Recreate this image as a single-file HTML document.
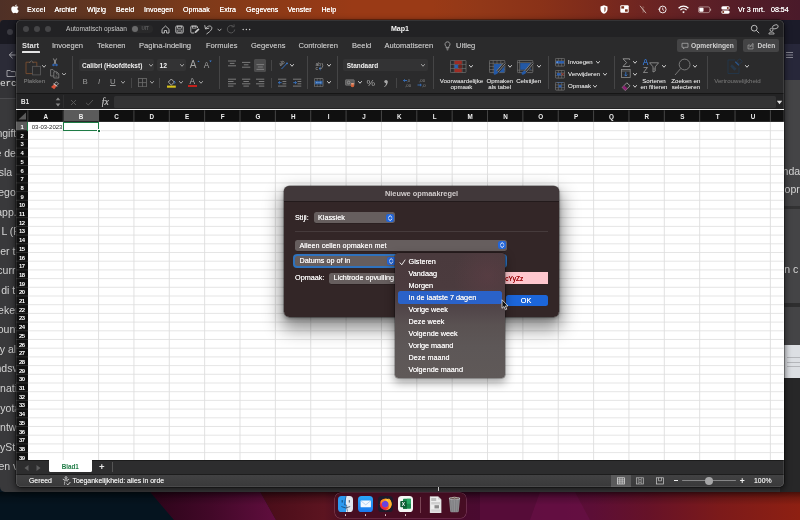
<!DOCTYPE html><html><head><meta charset="utf-8"><title>Excel</title><style>html,body{margin:0;padding:0;}body{width:800px;height:520px;overflow:hidden;position:relative;background:#1a0a18;font-family:"Liberation Sans", sans-serif;-webkit-font-smoothing:antialiased;}div,svg{box-sizing:border-box;}</style></head><body><div id="root" style="position:absolute;left:0;top:0;width:800px;height:520px;will-change:transform;overflow:hidden;"><div style="position:absolute;left:0;top:0;width:800px;height:520px;background:linear-gradient(90deg,#4f3026 0%,#5c3422 7.500%,#6c381e 17.500%,#7e3a1a 25%,#8e3a17 35%,#9a3a16 44%,#9a3a16 54%,#923818 60%,#8a3218 67.500%,#7c2a1c 75%,#6c2422 81%,#5e2026 87.500%,#501c28 95%,#4a1a2a 100%);"></div>
<div style="position:absolute;left:0;top:486px;width:800px;height:34px;background:linear-gradient(90deg,#05141f 0%,#05141f 18%,#560c38 58%,#560c38 67%,#5c0e36 74%,#661228 81%,#7c1a1a 90%,#8e2012 100%);"></div>
<svg style="position:absolute;left:0;top:486px" width="800" height="34" viewBox="0 0 800 34"><defs><linearGradient id="wm" x1="0" x2="1" y1="0" y2="0"><stop offset="0" stop-color="#2a0418"/><stop offset="0.500" stop-color="#420828"/><stop offset="1" stop-color="#600e3e"/></linearGradient><linearGradient id="wm2" x1="0" x2="1" y1="0" y2="0"><stop offset="0" stop-color="#470c18"/><stop offset="0.300" stop-color="#5c1420"/><stop offset="0.400" stop-color="#4a0e22"/><stop offset="1" stop-color="#4a0a30"/></linearGradient></defs><polygon points="0,0 145,0 174,34 0,34" fill="#05141f"/><polygon points="145,0 257,0 276,34 174,34" fill="url(#wm)"/><polygon points="257,0 480,0 480,34 276,34" fill="url(#wm2)"/><polygon points="540,6 575,6 590,34 530,34" fill="#681046" opacity="0.700"/></svg>
<svg style="position:absolute;left:10.5px;top:4.3px;" width="8.2" height="9.7" viewBox="0 0 10 11.500" ><path d="M5,3.200 C4.200,3.200 3.600,2.700 2.800,2.700 C1.500,2.700 0.300,3.800 0.300,5.900 C0.300,8.200 1.800,11 3.100,11 C3.800,11 4.200,10.500 5,10.500 C5.800,10.500 6.100,11 6.900,11 C8,11 9,9.300 9.500,8 C8.400,7.500 7.800,6.600 7.800,5.600 C7.800,4.600 8.300,3.900 9.100,3.400 C8.500,2.900 7.800,2.700 7.200,2.700 C6.300,2.700 5.700,3.200 5,3.200 Z M5,2.500 C5,1.400 5.900,0.400 7,0.300 C7.100,1.500 6.100,2.500 5,2.500 Z" fill="#fff"/></svg>
<div style="position:absolute;left:27px;top:-0.5px;height:20px;line-height:20px;font-size:7.1px;color:#fff;font-weight:bold;white-space:nowrap;">Excel</div>
<div style="position:absolute;left:54.5px;top:-0.5px;height:20px;line-height:20px;font-size:7.1px;color:#fff;font-weight:normal;white-space:nowrap;text-shadow:0 0 0.4px #fff;">Archief</div>
<div style="position:absolute;left:87px;top:-0.5px;height:20px;line-height:20px;font-size:7.1px;color:#fff;font-weight:normal;white-space:nowrap;text-shadow:0 0 0.4px #fff;">Wijzig</div>
<div style="position:absolute;left:116px;top:-0.5px;height:20px;line-height:20px;font-size:7.1px;color:#fff;font-weight:normal;white-space:nowrap;text-shadow:0 0 0.4px #fff;">Beeld</div>
<div style="position:absolute;left:144px;top:-0.5px;height:20px;line-height:20px;font-size:7.1px;color:#fff;font-weight:normal;white-space:nowrap;text-shadow:0 0 0.4px #fff;">Invoegen</div>
<div style="position:absolute;left:183px;top:-0.5px;height:20px;line-height:20px;font-size:7.1px;color:#fff;font-weight:normal;white-space:nowrap;text-shadow:0 0 0.4px #fff;">Opmaak</div>
<div style="position:absolute;left:219.5px;top:-0.5px;height:20px;line-height:20px;font-size:7.1px;color:#fff;font-weight:normal;white-space:nowrap;text-shadow:0 0 0.4px #fff;">Extra</div>
<div style="position:absolute;left:246px;top:-0.5px;height:20px;line-height:20px;font-size:7.1px;color:#fff;font-weight:normal;white-space:nowrap;text-shadow:0 0 0.4px #fff;">Gegevens</div>
<div style="position:absolute;left:287.5px;top:-0.5px;height:20px;line-height:20px;font-size:7.1px;color:#fff;font-weight:normal;white-space:nowrap;text-shadow:0 0 0.4px #fff;">Venster</div>
<div style="position:absolute;left:321.5px;top:-0.5px;height:20px;line-height:20px;font-size:7.1px;color:#fff;font-weight:normal;white-space:nowrap;text-shadow:0 0 0.4px #fff;">Help</div>
<div style="position:absolute;left:738px;top:-0.5px;height:20px;line-height:20px;font-size:7.1px;color:#fff;font-weight:normal;white-space:nowrap;text-shadow:0 0 0.4px #fff;">Vr 3 mrt.</div>
<div style="position:absolute;left:771px;top:-0.5px;height:20px;line-height:20px;font-size:7.1px;color:#fff;font-weight:normal;white-space:nowrap;text-shadow:0 0 0.4px #fff;">08:54</div>
<svg style="position:absolute;left:600.4px;top:4.8px;" width="8" height="9" viewBox="0 0 8 9" ><path d="M4 0.300 L7.500 1.400 V4.500 C7.500 6.800 5.800 8.200 4 8.800 C2.200 8.200 0.500 6.800 0.500 4.500 V1.400 Z" fill="#fff"/><path d="M4 2 L6 2.600 V4.500 C6 5.800 5 6.700 4 7.100 Z" fill="#7a2e18" opacity="0.55"/></svg>
<svg style="position:absolute;left:620.4px;top:5.3px;" width="9" height="8" viewBox="0 0 9 8" ><rect x="0.300" y="0.300" width="8.400" height="7.400" rx="1" fill="#fff"/><rect x="1.300" y="1.200" width="2.800" height="2.400" fill="#7a2e18"/><rect x="5" y="4.300" width="2.700" height="2.400" fill="#7a2e18"/></svg>
<svg style="position:absolute;left:639.4px;top:5px;" width="8" height="9" viewBox="0 0 8 9" ><path d="M1 0.800 L7 8.200" stroke="#d9c9c2" stroke-width="0.800"/><path d="M3 3.300 L5.300 6 L4 7.500 V1.500 L5 2.600" stroke="#d9c9c2" stroke-width="0.500" fill="none" opacity="0.600"/></svg>
<svg style="position:absolute;left:657.5px;top:5px;" width="9" height="9" viewBox="0 0 9 9" ><circle cx="4.700" cy="4.500" r="3.400" fill="none" stroke="#fff" stroke-width="0.900"/><path d="M4.700 2.600 V4.700 L6 5.500" stroke="#fff" stroke-width="0.800" fill="none"/><path d="M0.200 3.600 L1.300 5 L2.400 3.600" fill="none" stroke="#fff" stroke-width="0.700"/></svg>
<svg style="position:absolute;left:677.8px;top:5px;" width="11" height="9" viewBox="0 0 11 9" ><path d="M0.600 3.200 A7 7 0 0 1 10.400 3.200" stroke="#fff" stroke-width="1.300" fill="none"/><path d="M2.400 5.100 A4.500 4.500 0 0 1 8.600 5.100" stroke="#fff" stroke-width="1.300" fill="none"/><path d="M4.200 6.900 A2 2 0 0 1 6.800 6.900 L5.500 8.300 Z" fill="#fff"/></svg>
<svg style="position:absolute;left:697.8px;top:5.5px;" width="14" height="8" viewBox="0 0 14 8" ><rect x="0.400" y="0.900" width="11.400" height="5.700" rx="1.600" fill="none" stroke="#e8d8d2" stroke-width="0.700" opacity="0.75"/><rect x="1.300" y="1.800" width="4.200" height="3.900" rx="0.800" fill="#fff"/><path d="M12.600 2.800 V4.700" stroke="#e8d8d2" stroke-width="1" opacity="0.700"/></svg>
<svg style="position:absolute;left:720.8px;top:5.5px;" width="9" height="8" viewBox="0 0 9 8" ><rect x="0.300" y="0.300" width="8.400" height="3.300" rx="1.600" fill="#fff"/><rect x="0.300" y="4.400" width="8.400" height="3.300" rx="1.600" fill="#fff"/><circle cx="6.800" cy="1.950" r="1" fill="#7a2e18"/><circle cx="2.200" cy="6.050" r="1" fill="#7a2e18"/></svg>
<div style="position:absolute;left:0px;top:19.500px;width:800px;height:472px;background:#39393b;border-radius:4px 0 0 5px;overflow:hidden;"><div style="position:absolute;left:0;top:0;width:800px;height:24.500px;background:#1a1a22;"></div><div style="position:absolute;left:0;top:24.500px;width:800px;height:53px;background:#2b2b37;"></div><div style="position:absolute;left:780px;top:0;width:20px;height:60.500px;background:#1b1b29;"></div><div style="position:absolute;left:780px;top:24.500px;width:20px;height:36px;background:#27273a;"></div><div style="position:absolute;left:780px;top:60.500px;width:20px;height:420px;background:#444446;"></div><div style="position:absolute;left:780px;top:186px;width:20px;height:3.800px;background:#323233;"></div><div style="position:absolute;left:780px;top:283px;width:20px;height:4.500px;background:#2e2e2f;"></div><div style="position:absolute;left:780px;top:326px;width:20px;height:146px;background:#272728;"></div><div style="position:absolute;left:784px;top:325.500px;width:17px;height:32.700px;background:#dcdfe3;"></div><div style="position:absolute;left:787px;top:337.500px;width:14px;height:1px;background:#b4b6ba;"></div><div style="position:absolute;left:787px;top:342.300px;width:14px;height:1px;background:#b4b6ba;"></div><div style="position:absolute;left:787px;top:346.800px;width:14px;height:1px;background:#b4b6ba;"></div></div>
<div style="position:absolute;left:6.800px;top:28.800px;width:6.400px;height:6.400px;border-radius:50%;background:#3b3b42;"></div>
<svg style="position:absolute;left:7px;top:50px;" width="11" height="10" viewBox="0 0 11 10" ><path d="M9 5 H2.500 M5.500 1.800 L2.300 5 L5.500 8.200" stroke="#b4b4ba" stroke-width="0.900" fill="none"/></svg>
<svg style="position:absolute;left:6px;top:67.8px;" width="11" height="10" viewBox="0 0 11 10" ><path d="M1 2.500 H4.200 L5.200 3.600 H9.500 V8.500 H1 Z" stroke="#b8b8bd" stroke-width="0.800" fill="none"/></svg>
<div style="position:absolute;left:0px;top:80px;width:17px;height:18px;background:#343437;"></div>
<div style="position:absolute;left:0.1px;top:73.8px;height:20px;line-height:20px;font-size:9.5px;color:#e2e2e2;font-weight:normal;white-space:nowrap;font-family:'Liberation Mono',monospace;letter-spacing:-0.2px;">erc</div>
<div style="position:absolute;left:0px;top:98px;width:17px;height:0.8px;background:#4c4c4f;"></div>
<svg style="position:absolute;left:785.8px;top:51px;" width="8" height="8" viewBox="0 0 8 8" ><path d="M0 1.500 H7 M0 4 H7 M0 6.500 H7" stroke="#9c9ca6" stroke-width="0.800"/></svg>
<div style="position:absolute;left:-3.6px;top:123.19999999999999px;height:20px;line-height:20px;font-size:10.5px;color:#d4d4d4;font-weight:normal;white-space:nowrap;">ngift</div>
<div style="position:absolute;left:-4.5px;top:142.79999999999998px;height:20px;line-height:20px;font-size:10.5px;color:#d4d4d4;font-weight:normal;white-space:nowrap;">e de</div>
<div style="position:absolute;left:-1.3px;top:162.39999999999998px;height:20px;line-height:20px;font-size:10.5px;color:#d4d4d4;font-weight:normal;white-space:nowrap;">sla</div>
<div style="position:absolute;left:-1.8px;top:182.0px;height:20px;line-height:20px;font-size:10.5px;color:#d4d4d4;font-weight:normal;white-space:nowrap;">ego</div>
<div style="position:absolute;left:-3.8px;top:201.6px;height:20px;line-height:20px;font-size:10.5px;color:#d4d4d4;font-weight:normal;white-space:nowrap;">app.</div>
<div style="position:absolute;left:1.5px;top:221.2px;height:20px;line-height:20px;font-size:10.5px;color:#d4d4d4;font-weight:normal;white-space:nowrap;">L (F</div>
<div style="position:absolute;left:0.2px;top:240.8px;height:20px;line-height:20px;font-size:10.5px;color:#d4d4d4;font-weight:normal;white-space:nowrap;">er t</div>
<div style="position:absolute;left:-2.7px;top:260.4px;height:20px;line-height:20px;font-size:10.5px;color:#d4d4d4;font-weight:normal;white-space:nowrap;">curre</div>
<div style="position:absolute;left:1.2px;top:280.0px;height:20px;line-height:20px;font-size:10.5px;color:#d4d4d4;font-weight:normal;white-space:nowrap;">di t</div>
<div style="position:absolute;left:-1.9px;top:299.6px;height:20px;line-height:20px;font-size:10.5px;color:#d4d4d4;font-weight:normal;white-space:nowrap;">eker</div>
<div style="position:absolute;left:-2.3px;top:319.2px;height:20px;line-height:20px;font-size:10.5px;color:#d4d4d4;font-weight:normal;white-space:nowrap;">ount</div>
<div style="position:absolute;left:-0.2px;top:338.8px;height:20px;line-height:20px;font-size:10.5px;color:#d4d4d4;font-weight:normal;white-space:nowrap;">y al</div>
<div style="position:absolute;left:-4.5px;top:358.4px;height:20px;line-height:20px;font-size:10.5px;color:#d4d4d4;font-weight:normal;white-space:nowrap;">ndsv</div>
<div style="position:absolute;left:0.1px;top:378.0px;height:20px;line-height:20px;font-size:10.5px;color:#d4d4d4;font-weight:normal;white-space:nowrap;">nati</div>
<div style="position:absolute;left:0.3px;top:397.6px;height:20px;line-height:20px;font-size:10.5px;color:#d4d4d4;font-weight:normal;white-space:nowrap;">yota</div>
<div style="position:absolute;left:0.1px;top:417.2px;height:20px;line-height:20px;font-size:10.5px;color:#d4d4d4;font-weight:normal;white-space:nowrap;">ntw</div>
<div style="position:absolute;left:0px;top:436.8px;height:20px;line-height:20px;font-size:10.5px;color:#d4d4d4;font-weight:normal;white-space:nowrap;">ySt</div>
<div style="position:absolute;left:-1.5px;top:456.40000000000003px;height:20px;line-height:20px;font-size:10.5px;color:#d4d4d4;font-weight:normal;white-space:nowrap;">en v</div>
<div style="position:absolute;left:782.6px;top:160.9px;height:20px;line-height:20px;font-size:10.5px;color:#d6d6d6;font-weight:normal;white-space:nowrap;">nda</div>
<div style="position:absolute;left:784.6px;top:178.8px;height:20px;line-height:20px;font-size:10.5px;color:#d6d6d6;font-weight:normal;white-space:nowrap;">opr</div>
<div style="position:absolute;left:784.3px;top:258.5px;height:20px;line-height:20px;font-size:10.5px;color:#d6d6d6;font-weight:normal;white-space:nowrap;">n c</div>
<div style="position:absolute;left:0;top:491.500px;width:800px;height:13px;background:linear-gradient(180deg,rgba(0,0,0,0.500),rgba(0,0,0,0.180) 45%,rgba(0,0,0,0));"></div>
<div style="position:absolute;left:16.25px;top:20px;width:767.65px;height:467px;border-radius:5px;box-shadow:0 2px 6px 1px rgba(0,0,0,0.55),0 0 0 0.500px rgba(0,0,0,0.600);"></div>
<div id="xl" style="position:absolute;left:16.25px;top:20px;width:767.65px;height:467px;border-radius:5px;overflow:hidden;background:#2b2b2b;">
<div style="position:absolute;left:0.0px;top:0px;width:767.65px;height:17px;background:#222224;"></div>
<div style="position:absolute;left:0.0px;top:17px;width:767.65px;height:56.5px;background:#2b2b2c;"></div>
<div style="position:absolute;left:0.0px;top:73.5px;width:767.65px;height:16px;background:#232324;"></div>
<div style="position:absolute;left:0.0px;top:73px;width:767.65px;height:0.8px;background:#161616;"></div>
<div style="position:absolute;left:6.65px;top:5.9px;width:6.2px;height:6.2px;background:#454547;border-radius:50%;"></div>
<div style="position:absolute;left:17.65px;top:5.9px;width:6.2px;height:6.2px;background:#454547;border-radius:50%;"></div>
<div style="position:absolute;left:28.65px;top:5.9px;width:6.2px;height:6.2px;background:#454547;border-radius:50%;"></div>
<div style="position:absolute;left:49.75px;top:-1px;height:20px;line-height:20px;font-size:6.57px;color:#c9c9c9;font-weight:normal;white-space:nowrap;">Automatisch opslaan</div>
<div style="position:absolute;left:114.75px;top:5.3px;width:22px;height:7.4px;background:#29292a;border-radius:3.700px;"></div>
<div style="position:absolute;left:115.25px;top:5.6px;width:6.8px;height:6.8px;background:#6a6a6b;border-radius:50%;"></div>
<div style="position:absolute;left:125.25px;top:-0.8000000000000007px;height:20px;line-height:20px;font-size:4.6px;color:#5d5d5e;font-weight:bold;white-space:nowrap;">UIT</div>
<svg style="position:absolute;left:144.25px;top:4.5px;" width="9" height="9" viewBox="0 0 9 9" ><path d="M1 4.300 L4.500 1 L8 4.300 V8 H5.600 V5.500 H3.400 V8 H1 Z" fill="none" stroke="#c8c8c8" stroke-width="0.900" stroke-linejoin="round"/></svg>
<svg style="position:absolute;left:158.75px;top:4.5px;" width="9" height="9" viewBox="0 0 9 9" ><rect x="0.800" y="1" width="7.400" height="7" rx="1" fill="none" stroke="#c8c8c8" stroke-width="0.900"/><rect x="2.600" y="1.200" width="3.800" height="2" fill="none" stroke="#c8c8c8" stroke-width="0.700"/><rect x="2.300" y="5" width="4.400" height="2.200" rx="0.500" fill="none" stroke="#c8c8c8" stroke-width="0.700"/></svg>
<svg style="position:absolute;left:173.25px;top:4.5px;" width="10" height="9" viewBox="0 0 10 9" ><path d="M7.500 3 V1.800 L6.800 1 H1.800 Q0.800 1 0.800 2 V7 Q0.800 8 1.800 8 H4" fill="none" stroke="#c8c8c8" stroke-width="0.900"/><rect x="2.600" y="1.200" width="3.400" height="1.900" fill="none" stroke="#c8c8c8" stroke-width="0.700"/><path d="M4.500 8.300 L5 6.500 L8.300 3.200 L9.500 4.400 L6.200 7.700 Z" fill="#c8c8c8"/></svg>
<svg style="position:absolute;left:188.05px;top:3.5px;" width="10" height="11" viewBox="0 0 10 11" ><path d="M1.700 4.600 C3 2.200 5.800 1.200 7.300 2.700 C8.900 4.400 7 7 2.800 9.800" fill="none" stroke="#c8c8c8" stroke-width="0.900" stroke-linecap="round"/><path d="M0.800 1.600 L1.500 5 L4.800 4.200" fill="none" stroke="#c8c8c8" stroke-width="0.900" stroke-linejoin="round" stroke-linecap="round"/></svg>
<svg style="position:absolute;left:200.25px;top:7.5px;" width="5" height="4" viewBox="0 0 5 4" ><path d="M0.600 0.800 L2.500 2.800 L4.400 0.800" fill="none" stroke="#c8c8c8" stroke-width="0.800"/></svg>
<svg style="position:absolute;left:209.75px;top:4px;" width="10" height="10" viewBox="0 0 10 10" ><path d="M7.500 2.500 A3.700 3.700 0 1 0 8.700 5.500" fill="none" stroke="#5a5a5b" stroke-width="0.900"/><path d="M5.500 2.800 L8.200 2.800 L8 0.300" fill="none" stroke="#5a5a5b" stroke-width="0.800"/></svg>
<svg style="position:absolute;left:225.25px;top:7.5px;" width="9" height="3" viewBox="0 0 9 3" ><circle cx="1.200" cy="1.500" r="0.750" fill="#c8c8c8"/><circle cx="4.400" cy="1.500" r="0.750" fill="#c8c8c8"/><circle cx="7.600" cy="1.500" r="0.750" fill="#c8c8c8"/></svg>
<div style="position:absolute;left:383.75px;top:-0.6999999999999993px;height:20px;line-height:20px;font-size:7.1px;color:#f4f4f4;font-weight:bold;white-space:nowrap;transform:translateX(-50%);">Map1</div>
<svg style="position:absolute;left:733.75px;top:4px;" width="10" height="10" viewBox="0 0 10 10" ><circle cx="4.200" cy="4.200" r="2.900" fill="none" stroke="#c8c8c8" stroke-width="0.900"/><path d="M6.300 6.300 L9.200 9.200" stroke="#c8c8c8" stroke-width="0.900"/></svg>
<svg style="position:absolute;left:751.75px;top:3.5px;" width="11" height="11" viewBox="0 0 11 11" ><rect x="4.600" y="1" width="5.600" height="3.600" rx="1.800" fill="none" stroke="#c8c8c8" stroke-width="0.800" transform="rotate(-18 7.400 2.800)"/><circle cx="3.500" cy="5.800" r="1.500" fill="none" stroke="#c8c8c8" stroke-width="0.800"/><path d="M0.800 10 C0.800 7.500 6.200 7.500 6.200 10 Z" fill="none" stroke="#c8c8c8" stroke-width="0.800"/></svg>
<div style="position:absolute;left:5.75px;top:15.899999999999999px;height:20px;line-height:20px;font-size:7.5px;color:#e2e2e2;font-weight:bold;white-space:nowrap;">Start</div>
<div style="position:absolute;left:35.75px;top:15.899999999999999px;height:20px;line-height:20px;font-size:7.55px;color:#b4b4b4;font-weight:normal;white-space:nowrap;text-shadow:0 0 0.350px #b4b4b4;">Invoegen</div>
<div style="position:absolute;left:80.75px;top:15.899999999999999px;height:20px;line-height:20px;font-size:7.55px;color:#b4b4b4;font-weight:normal;white-space:nowrap;text-shadow:0 0 0.350px #b4b4b4;">Tekenen</div>
<div style="position:absolute;left:122.75px;top:15.899999999999999px;height:20px;line-height:20px;font-size:7.55px;color:#b4b4b4;font-weight:normal;white-space:nowrap;text-shadow:0 0 0.350px #b4b4b4;">Pagina-indeling</div>
<div style="position:absolute;left:189.75px;top:15.899999999999999px;height:20px;line-height:20px;font-size:7.55px;color:#b4b4b4;font-weight:normal;white-space:nowrap;text-shadow:0 0 0.350px #b4b4b4;">Formules</div>
<div style="position:absolute;left:234.75px;top:15.899999999999999px;height:20px;line-height:20px;font-size:7.55px;color:#b4b4b4;font-weight:normal;white-space:nowrap;text-shadow:0 0 0.350px #b4b4b4;">Gegevens</div>
<div style="position:absolute;left:282.25px;top:15.899999999999999px;height:20px;line-height:20px;font-size:7.55px;color:#b4b4b4;font-weight:normal;white-space:nowrap;text-shadow:0 0 0.350px #b4b4b4;">Controleren</div>
<div style="position:absolute;left:335.75px;top:15.899999999999999px;height:20px;line-height:20px;font-size:7.55px;color:#b4b4b4;font-weight:normal;white-space:nowrap;text-shadow:0 0 0.350px #b4b4b4;">Beeld</div>
<div style="position:absolute;left:368.25px;top:15.899999999999999px;height:20px;line-height:20px;font-size:7.55px;color:#b4b4b4;font-weight:normal;white-space:nowrap;text-shadow:0 0 0.350px #b4b4b4;">Automatiseren</div>
<div style="position:absolute;left:439.75px;top:15.899999999999999px;height:20px;line-height:20px;font-size:7.55px;color:#b4b4b4;font-weight:normal;white-space:nowrap;text-shadow:0 0 0.350px #b4b4b4;">Uitleg</div>
<div style="position:absolute;left:5.75px;top:31.3px;width:17.8px;height:1.4px;background:#e4e4e4;border-radius:0.600px;"></div>
<svg style="position:absolute;left:427.25px;top:20.5px;" width="7" height="10" viewBox="0 0 7 10" ><path d="M3.500 0.800 A2.500 2.500 0 0 1 5 5.300 V6.600 H2 V5.300 A2.500 2.500 0 0 1 3.500 0.800 Z" fill="none" stroke="#b4b4b4" stroke-width="0.750"/><path d="M2.300 7.800 H4.700 M2.800 8.900 H4.200" stroke="#b4b4b4" stroke-width="0.700"/></svg>
<div style="position:absolute;left:660.55px;top:19.4px;width:60.3px;height:13.1px;background:#444445;border-radius:2px;"></div>
<svg style="position:absolute;left:665.05px;top:22.3px;" width="8" height="8" viewBox="0 0 8 8" ><path d="M1 1.300 H7 V5.300 H3.800 L2.600 6.800 V5.300 H1 Z" fill="none" stroke="#b4b4b4" stroke-width="0.700" stroke-linejoin="round"/></svg>
<div style="position:absolute;left:674.75px;top:16px;height:20px;line-height:20px;font-size:6.65px;color:#d2d2d2;font-weight:bold;white-space:nowrap;">Opmerkingen</div>
<div style="position:absolute;left:726.75px;top:19.4px;width:36px;height:13.1px;background:#444445;border-radius:2px;"></div>
<svg style="position:absolute;left:730.25px;top:22.3px;" width="7.8" height="7.8" viewBox="0 0 9 9" ><path d="M3.500 3.500 H1.200 V8 H7 V6" fill="none" stroke="#b4b4b4" stroke-width="0.700"/><path d="M3.200 6 C3.500 4 5 3 6.500 3 V1.500 L8.600 3.600 L6.500 5.600 V4.200 C5 4.200 4 4.800 3.200 6 Z" fill="none" stroke="#b4b4b4" stroke-width="0.650" stroke-linejoin="round"/></svg>
<div style="position:absolute;left:741.25px;top:16px;height:20px;line-height:20px;font-size:6.5px;color:#d2d2d2;font-weight:bold;white-space:nowrap;">Delen</div>
<div style="position:absolute;left:4.75px;top:72px;height:20px;line-height:20px;font-size:6.8px;color:#e8e8e8;font-weight:normal;white-space:nowrap;text-shadow:0 0 0.300px #e8e8e8;">B1</div>
<svg style="position:absolute;left:38.25px;top:76px;" width="6" height="12" viewBox="0 0 6 12" ><path d="M0.700 4.300 L3 1.400 L5.300 4.300 Z" fill="#888"/><path d="M0.700 7.600 L3 10.500 L5.300 7.600 Z" fill="#888"/></svg>
<div style="position:absolute;left:46.75px;top:75px;width:0.7px;height:13px;background:#2e2e2f;"></div>
<svg style="position:absolute;left:53.75px;top:78.5px;" width="7" height="7" viewBox="0 0 7 7" ><path d="M1 1 L6 6 M6 1 L1 6" stroke="#5c5c5c" stroke-width="0.900"/></svg>
<svg style="position:absolute;left:68.25px;top:78.5px;" width="9" height="7" viewBox="0 0 9 7" ><path d="M1 3.800 L3.300 6 L8 1" stroke="#5c5c5c" stroke-width="0.900" fill="none"/></svg>
<div style="position:absolute;left:85.55px;top:72.2px;height:20px;line-height:20px;font-size:9.6px;color:#b4b4b4;font-weight:normal;white-space:nowrap;font-family:'Liberation Serif',serif;text-shadow:0 0 0.300px #b4b4b4;"><i>fx</i></div>
<div style="position:absolute;left:97.25px;top:76px;width:662px;height:11.8px;background:#333334;border-radius:1.500px;"></div>
<svg style="position:absolute;left:760.05px;top:79.5px;" width="7" height="5" viewBox="0 0 7 5" ><path d="M0.800 0.800 H6.200 L3.500 4.300 Z" fill="#e0e0e0"/></svg>
<svg style="position:absolute;left:8.25px;top:39.5px;" width="17" height="16" viewBox="0 0 17 16" ><path d="M7 2.200 H11.800 V13.600 H1 V2.200 H5.500" fill="none" stroke="#80502f" stroke-width="0.850"/><path d="M4.200 2.800 L6.400 0.800 L8.600 2.800" fill="none" stroke="#6c6c6c" stroke-width="0.800"/><rect x="7.600" y="6.300" width="7.800" height="8.600" fill="#2b2b2c" stroke="#5d5d5e" stroke-width="0.800"/></svg>
<svg style="position:absolute;left:25.95px;top:44.925px;" width="4.0" height="2.75" viewBox="0 0 4.0 2.75" ><path d="M0.500 0.500 L2.0 2.25 L3.5 0.500" fill="none" stroke="#bdbdbd" stroke-width="1" stroke-linecap="round" stroke-linejoin="round"/></svg>
<div style="position:absolute;left:18.05px;top:50.6px;height:20px;line-height:20px;font-size:6.1px;color:#6e6e6e;font-weight:normal;white-space:nowrap;transform:translateX(-50%);text-shadow:0 0 0.150px #6e6e6e;">Plakken</div>
<svg style="position:absolute;left:34.25px;top:38px;" width="8" height="9" viewBox="0 0 8 9" ><path d="M2.400 0.500 L5 6 M5.600 0.500 L3 6" stroke="#c2c2c2" stroke-width="0.700"/><circle cx="2.500" cy="7" r="1.250" fill="#2f62ad"/><circle cx="5.500" cy="7" r="1.250" fill="#2f62ad"/></svg>
<svg style="position:absolute;left:33.55px;top:49px;" width="10" height="10" viewBox="0 0 10 10" ><path d="M0.600 0.600 H3 L4.600 2.200 V7 H0.600 Z" fill="none" stroke="#8a8a8a" stroke-width="0.750" stroke-linejoin="round"/><path d="M3.800 2.800 H6.800 L8.800 4.800 V9 H3.800 Z" fill="#2b2b2c" stroke="#8a8a8a" stroke-width="0.750" stroke-linejoin="round"/><path d="M6.600 3 V5 H8.600" fill="none" stroke="#8a8a8a" stroke-width="0.600"/><path d="M5.600 7.200 H7.200" stroke="#8a8a8a" stroke-width="0.600"/></svg>
<svg style="position:absolute;left:45.45px;top:52.625px;" width="4.0" height="2.75" viewBox="0 0 4.0 2.75" ><path d="M0.500 0.500 L2.0 2.25 L3.5 0.500" fill="none" stroke="#bdbdbd" stroke-width="1" stroke-linecap="round" stroke-linejoin="round"/></svg>
<svg style="position:absolute;left:33.55px;top:60.8px;" width="10" height="9" viewBox="0 0 10 9" ><path d="M6 0.800 L8.600 2.600 L6.800 4.600 L4.400 3 Z" fill="none" stroke="#b5b5b5" stroke-width="0.750"/><path d="M4.100 3.200 L6.700 5 L4.200 8.200 L1 6 Z" fill="#d8533a"/><path d="M3.300 2.800 L7.300 5.400" stroke="#e8e8e8" stroke-width="0.700"/></svg>
<div style="position:absolute;left:55.9px;top:36.2px;width:0.7px;height:32.8px;background:#454546;"></div>
<div style="position:absolute;left:62.5px;top:38.75px;width:75.7px;height:12.6px;background:#333334;border-radius:2px;"></div>
<div style="position:absolute;left:65.75px;top:35.6px;height:20px;line-height:20px;font-size:6.5px;color:#f0f0f0;font-weight:bold;white-space:nowrap;">Calibri (Hoofdtekst)</div>
<svg style="position:absolute;left:132.65px;top:44.225px;" width="4.0" height="2.75" viewBox="0 0 4.0 2.75" ><path d="M0.500 0.500 L2.0 2.25 L3.5 0.500" fill="none" stroke="#a8a8a8" stroke-width="1" stroke-linecap="round" stroke-linejoin="round"/></svg>
<div style="position:absolute;left:140.25px;top:38.75px;width:29.1px;height:12.6px;background:#333334;border-radius:2px;"></div>
<div style="position:absolute;left:143.35px;top:35.6px;height:20px;line-height:20px;font-size:6.8px;color:#f0f0f0;font-weight:bold;white-space:nowrap;">12</div>
<svg style="position:absolute;left:163.25px;top:44.225px;" width="4.0" height="2.75" viewBox="0 0 4.0 2.75" ><path d="M0.500 0.500 L2.0 2.25 L3.5 0.500" fill="none" stroke="#a8a8a8" stroke-width="1" stroke-linecap="round" stroke-linejoin="round"/></svg>
<div style="position:absolute;left:176.75px;top:34.8px;height:20px;line-height:20px;font-size:10px;color:#a4a4a4;font-weight:normal;white-space:nowrap;transform:translateX(-50%);">A</div>
<svg style="position:absolute;left:180.25px;top:39.5px;" width="3" height="2.5" viewBox="0 0 3 2.5" ><path d="M0.300 2.200 L1.500 0.400 L2.700 2.200 Z" fill="#3a7bd0"/></svg>
<div style="position:absolute;left:190.25px;top:35.3px;height:20px;line-height:20px;font-size:8.3px;color:#a4a4a4;font-weight:normal;white-space:nowrap;transform:translateX(-50%);">A</div>
<svg style="position:absolute;left:192.25px;top:40px;" width="3" height="2.5" viewBox="0 0 3 2.5" ><path d="M0.300 0.400 L1.500 2.200 L2.700 0.400 Z" fill="#3a7bd0"/></svg>
<div style="position:absolute;left:68.75px;top:52px;height:20px;line-height:20px;font-size:7.8px;color:#9a9a9a;font-weight:normal;white-space:nowrap;transform:translateX(-50%);">B</div>
<div style="position:absolute;left:82.75px;top:52px;height:20px;line-height:20px;font-size:7.8px;color:#9a9a9a;font-weight:normal;white-space:nowrap;transform:translateX(-50%);"><i>I</i></div>
<div style="position:absolute;left:96.55px;top:51.8px;height:20px;line-height:20px;font-size:7.8px;color:#9a9a9a;font-weight:normal;white-space:nowrap;transform:translateX(-50%);text-decoration:underline;">U</div>
<svg style="position:absolute;left:104.95px;top:61.425px;" width="4.0" height="2.75" viewBox="0 0 4.0 2.75" ><path d="M0.500 0.500 L2.0 2.25 L3.5 0.500" fill="none" stroke="#a8a8a8" stroke-width="1" stroke-linecap="round" stroke-linejoin="round"/></svg>
<div style="position:absolute;left:114.4px;top:58px;width:0.7px;height:9.5px;background:#454546;"></div>
<svg style="position:absolute;left:121.25px;top:58px;" width="9" height="9.3" viewBox="0 0 9 9.3" ><rect x="0.400" y="0.400" width="8.200" height="8.400" fill="none" stroke="#6e6e6e" stroke-width="0.800"/><path d="M4.500 0.400 V8.800 M0.400 4.600 H8.600" stroke="#6e6e6e" stroke-width="0.800"/></svg>
<svg style="position:absolute;left:133.75px;top:61.425px;" width="4.0" height="2.75" viewBox="0 0 4.0 2.75" ><path d="M0.500 0.500 L2.0 2.25 L3.5 0.500" fill="none" stroke="#a8a8a8" stroke-width="1" stroke-linecap="round" stroke-linejoin="round"/></svg>
<div style="position:absolute;left:143.1px;top:58px;width:0.7px;height:9.5px;background:#454546;"></div>
<svg style="position:absolute;left:150.75px;top:57.5px;" width="9" height="10" viewBox="0 0 9 10" ><path d="M4.300 1 L7.400 4.100 L4.300 7 L1.300 4.100 Z" fill="none" stroke="#c9c9c9" stroke-width="0.800"/><path d="M7.300 3 Q8.600 4.800 7.600 5.600" stroke="#3a7bd0" stroke-width="0.900" fill="none"/><rect x="0" y="7.600" width="8.800" height="2.100" fill="#d8c21a"/></svg>
<svg style="position:absolute;left:162.45px;top:61.425px;" width="4.0" height="2.75" viewBox="0 0 4.0 2.75" ><path d="M0.500 0.500 L2.0 2.25 L3.5 0.500" fill="none" stroke="#a8a8a8" stroke-width="1" stroke-linecap="round" stroke-linejoin="round"/></svg>
<div style="position:absolute;left:175.95px;top:51px;height:20px;line-height:20px;font-size:8.3px;color:#b0b0b0;font-weight:normal;white-space:nowrap;transform:translateX(-50%);">A</div>
<div style="position:absolute;left:171.35px;top:65.3px;width:9px;height:2.1px;background:#c2211c;"></div>
<svg style="position:absolute;left:183.05px;top:61.425px;" width="4.0" height="2.75" viewBox="0 0 4.0 2.75" ><path d="M0.500 0.500 L2.0 2.25 L3.5 0.500" fill="none" stroke="#a8a8a8" stroke-width="1" stroke-linecap="round" stroke-linejoin="round"/></svg>
<div style="position:absolute;left:203.1px;top:36.2px;width:0.7px;height:32.8px;background:#454546;"></div>
<svg style="position:absolute;left:211.45px;top:40px;" width="8.8" height="10" viewBox="0 0 8.8 10" ><path d="M0 1 H8.3" stroke="#8f8f8f" stroke-width="0.800"/><path d="M1.8 3.4 H6.5" stroke="#8f8f8f" stroke-width="0.800"/><path d="M0 5.8 H8.3" stroke="#8f8f8f" stroke-width="0.800"/></svg>
<svg style="position:absolute;left:225.55px;top:40px;" width="8.8" height="10" viewBox="0 0 8.8 10" ><path d="M0 2.4 H8.3" stroke="#8f8f8f" stroke-width="0.800"/><path d="M1.8 4.8 H6.5" stroke="#8f8f8f" stroke-width="0.800"/><path d="M0 7.2 H8.3" stroke="#8f8f8f" stroke-width="0.800"/></svg>
<div style="position:absolute;left:237.55px;top:38.8px;width:12.7px;height:13.1px;background:#4b4b4c;border-radius:1.500px;"></div>
<svg style="position:absolute;left:239.55px;top:40px;" width="8.8" height="10" viewBox="0 0 8.8 10" ><path d="M0.5 4.6 H8.1" stroke="#8a8a8a" stroke-width="0.800"/><path d="M1.8 7 H6.8" stroke="#8a8a8a" stroke-width="0.800"/><path d="M0.5 9.4 H8.1" stroke="#8a8a8a" stroke-width="0.800"/></svg>
<svg style="position:absolute;left:211.45px;top:57.5px;" width="8.8" height="10" viewBox="0 0 8.8 10" ><path d="M0 1.2 H8.3" stroke="#8f8f8f" stroke-width="0.800"/><path d="M0 3.5 H5.5" stroke="#8f8f8f" stroke-width="0.800"/><path d="M0 5.8 H8.3" stroke="#8f8f8f" stroke-width="0.800"/><path d="M0 8.1 H5.5" stroke="#8f8f8f" stroke-width="0.800"/></svg>
<svg style="position:absolute;left:225.55px;top:57.5px;" width="8.8" height="10" viewBox="0 0 8.8 10" ><path d="M0 1.2 H8.3" stroke="#8f8f8f" stroke-width="0.800"/><path d="M1.4 3.5 H6.9" stroke="#8f8f8f" stroke-width="0.800"/><path d="M0 5.8 H8.3" stroke="#8f8f8f" stroke-width="0.800"/><path d="M1.4 8.1 H6.9" stroke="#8f8f8f" stroke-width="0.800"/></svg>
<svg style="position:absolute;left:239.55px;top:57.5px;" width="8.8" height="10" viewBox="0 0 8.8 10" ><path d="M0 1.2 H8.3" stroke="#8f8f8f" stroke-width="0.800"/><path d="M2.8 3.5 H8.3" stroke="#8f8f8f" stroke-width="0.800"/><path d="M0 5.8 H8.3" stroke="#8f8f8f" stroke-width="0.800"/><path d="M2.8 8.1 H8.3" stroke="#8f8f8f" stroke-width="0.800"/></svg>
<div style="position:absolute;left:254.6px;top:40px;width:0.7px;height:10.5px;background:#454546;"></div>
<div style="position:absolute;left:254.6px;top:58px;width:0.7px;height:9.5px;background:#454546;"></div>
<svg style="position:absolute;left:261.25px;top:40px;" width="10" height="10" viewBox="0 0 10 10" ><text x="1" y="5.500" font-size="5.500" fill="#a0a0a0" transform="rotate(-40 3 4)" font-family="Liberation Sans,sans-serif">ab</text><path d="M3.500 9 L9 3.300" stroke="#3a7bd0" stroke-width="0.900"/><circle cx="9" cy="3.300" r="0.900" fill="#3a7bd0"/></svg>
<svg style="position:absolute;left:273.95px;top:44.425px;" width="4.0" height="2.75" viewBox="0 0 4.0 2.75" ><path d="M0.500 0.500 L2.0 2.25 L3.5 0.500" fill="none" stroke="#d2d2d2" stroke-width="1" stroke-linecap="round" stroke-linejoin="round"/></svg>
<svg style="position:absolute;left:261.95px;top:57.5px;" width="9" height="10" viewBox="0 0 9 10" ><path d="M0 1.200 H8.300 M4.500 3.500 H8.300 M4.500 5.800 H8.300 M0 8.100 H8.300" stroke="#8f8f8f" stroke-width="0.800"/><path d="M3.600 4.650 H0.500 M1.800 3.300 L0.400 4.650 L1.800 6" stroke="#3a7bd0" stroke-width="0.900" fill="none"/></svg>
<svg style="position:absolute;left:276.25px;top:57.5px;" width="9" height="10" viewBox="0 0 9 10" ><path d="M0 1.200 H8.300 M4.500 3.500 H8.300 M4.500 5.800 H8.300 M0 8.100 H8.300" stroke="#8f8f8f" stroke-width="0.800"/><path d="M0.300 4.650 H3.400 M2.100 3.300 L3.500 4.650 L2.100 6" stroke="#3a7bd0" stroke-width="0.900" fill="none"/></svg>
<div style="position:absolute;left:291.0px;top:36.2px;width:0.7px;height:32.8px;background:#454546;"></div>
<svg style="position:absolute;left:298.75px;top:40.5px;" width="10" height="10" viewBox="0 0 10 10" ><text x="0.500" y="4.600" font-size="5" fill="#a0a0a0" font-family="Liberation Sans,sans-serif">ab</text><path d="M7 2 Q9 5 6.500 7.500 H4" stroke="#9a9a9a" stroke-width="0.700" fill="none"/><text x="0.500" y="9.300" font-size="5" fill="#a0a0a0" font-family="Liberation Sans,sans-serif">c</text><path d="M5.800 6 L4 7.500 L5.800 9" stroke="#3a7bd0" stroke-width="0.900" fill="none"/></svg>
<svg style="position:absolute;left:310.55px;top:44.425px;" width="4.0" height="2.75" viewBox="0 0 4.0 2.75" ><path d="M0.500 0.500 L2.0 2.25 L3.5 0.500" fill="none" stroke="#d2d2d2" stroke-width="1" stroke-linecap="round" stroke-linejoin="round"/></svg>
<svg style="position:absolute;left:297.75px;top:58px;" width="9.5" height="9.3" viewBox="0 0 9.5 9.3" ><rect x="0.400" y="0.400" width="8.600" height="8.400" rx="0.800" fill="none" stroke="#7b7b7b" stroke-width="0.800"/><rect x="0.900" y="2.800" width="7.600" height="3.600" fill="#2f5f9e"/><path d="M2.200 4.600 H7.200 M3.200 3.700 L2.200 4.600 L3.200 5.500 M6.200 3.700 L7.200 4.600 L6.200 5.500" stroke="#88b4ea" stroke-width="0.500" fill="none"/><path d="M3.200 0.400 V2.800 M6.200 0.400 V2.800 M3.200 6.400 V8.800 M6.200 6.400 V8.800" stroke="#7b7b7b" stroke-width="0.600"/></svg>
<svg style="position:absolute;left:310.55px;top:61.425px;" width="4.0" height="2.75" viewBox="0 0 4.0 2.75" ><path d="M0.500 0.500 L2.0 2.25 L3.5 0.500" fill="none" stroke="#d2d2d2" stroke-width="1" stroke-linecap="round" stroke-linejoin="round"/></svg>
<div style="position:absolute;left:321.0px;top:36.2px;width:0.7px;height:32.8px;background:#454546;"></div>
<div style="position:absolute;left:326.75px;top:38.75px;width:85px;height:12.6px;background:#333334;border-radius:2px;"></div>
<div style="position:absolute;left:330.45px;top:35.6px;height:20px;line-height:20px;font-size:6.45px;color:#f0f0f0;font-weight:bold;white-space:nowrap;">Standaard</div>
<svg style="position:absolute;left:405.15px;top:44.225px;" width="4.0" height="2.75" viewBox="0 0 4.0 2.75" ><path d="M0.500 0.500 L2.0 2.25 L3.5 0.500" fill="none" stroke="#a8a8a8" stroke-width="1" stroke-linecap="round" stroke-linejoin="round"/></svg>
<svg style="position:absolute;left:328.75px;top:58.5px;" width="11" height="9" viewBox="0 0 11 9" ><rect x="0.400" y="0.800" width="8.800" height="5.400" rx="0.600" fill="#5a5a5a" stroke="#8a8a8a" stroke-width="0.600"/><circle cx="3.600" cy="3.500" r="1.300" fill="none" stroke="#bbb" stroke-width="0.500"/><ellipse cx="7.500" cy="6.500" rx="1.800" ry="1.700" fill="#d0623a"/><ellipse cx="7.500" cy="4.800" rx="1.800" ry="0.700" fill="#e8a080"/></svg>
<svg style="position:absolute;left:341.45px;top:61.425px;" width="4.0" height="2.75" viewBox="0 0 4.0 2.75" ><path d="M0.500 0.500 L2.0 2.25 L3.5 0.500" fill="none" stroke="#d2d2d2" stroke-width="1" stroke-linecap="round" stroke-linejoin="round"/></svg>
<div style="position:absolute;left:354.45px;top:53px;height:20px;line-height:20px;font-size:9.6px;color:#a9a9a9;font-weight:normal;white-space:nowrap;transform:translateX(-50%);">%</div>
<svg style="position:absolute;left:366.25px;top:58.5px;" width="6" height="9" viewBox="0 0 6 9" ><circle cx="3" cy="2.600" r="1.700" fill="#a9a9a9"/><path d="M4.700 2.600 C4.700 5.500 3.300 7.300 1.200 8 L1 7.400 C2.400 6.800 3 5.600 3 4.200 Z" fill="#a9a9a9"/></svg>
<div style="position:absolute;left:379.4px;top:58px;width:0.7px;height:9.5px;background:#454546;"></div>
<svg style="position:absolute;left:386.25px;top:58px;" width="9.5" height="9.5" viewBox="0 0 9.5 9.5" ><text x="3.600" y="3.800" font-size="4.200" fill="#8d8d8d" font-family="Liberation Sans,sans-serif">,0</text><text x="2.200" y="8.800" font-size="4.200" fill="#8d8d8d" font-family="Liberation Sans,sans-serif">,00</text><path d="M4 2.500 H0.600 M1.800 1.300 L0.500 2.500 L1.800 3.700" stroke="#3a7bd0" stroke-width="0.800" fill="none"/></svg>
<svg style="position:absolute;left:400.25px;top:58px;" width="9.5" height="9.5" viewBox="0 0 9.5 9.5" ><text x="2.200" y="3.800" font-size="4.200" fill="#8d8d8d" font-family="Liberation Sans,sans-serif">,00</text><text x="5" y="8.800" font-size="4.200" fill="#8d8d8d" font-family="Liberation Sans,sans-serif">,0</text><path d="M0.500 7 H4.200 M3 5.800 L4.300 7 L3 8.200" stroke="#3a7bd0" stroke-width="0.800" fill="none"/></svg>
<div style="position:absolute;left:417.2px;top:36.2px;width:0.7px;height:32.8px;background:#454546;"></div>
<svg style="position:absolute;left:433.75px;top:40px;" width="16.5" height="13" viewBox="0 0 16.5 13" ><rect x="0.400" y="0.400" width="15.600" height="12.200" rx="0.800" fill="none" stroke="#777" stroke-width="0.700"/><path d="M4.300 0.400 V12.600 M8.200 0.400 V12.600 M12.100 0.400 V12.600 M0.400 4.400 H16 M0.400 8.500 H16" stroke="#777" stroke-width="0.600"/><rect x="4.600" y="0.800" width="7.200" height="3.300" fill="#9e2c24"/><rect x="4.600" y="4.800" width="3.300" height="3.400" fill="#2a5fb2"/><rect x="8.500" y="4.800" width="3.300" height="3.400" fill="#6e221c"/><rect x="4.600" y="8.900" width="7.200" height="3.300" fill="#9e2c24"/></svg>
<svg style="position:absolute;left:453.05px;top:44.925px;" width="4.0" height="2.75" viewBox="0 0 4.0 2.75" ><path d="M0.500 0.500 L2.0 2.25 L3.5 0.500" fill="none" stroke="#d2d2d2" stroke-width="1" stroke-linecap="round" stroke-linejoin="round"/></svg>
<div style="position:absolute;left:445.25px;top:50.6px;height:20px;line-height:20px;font-size:6.15px;color:#cacaca;font-weight:normal;white-space:nowrap;transform:translateX(-50%);text-shadow:0 0 0.150px #cacaca;">Voorwaardelijke</div>
<div style="position:absolute;left:445.25px;top:57.2px;height:20px;line-height:20px;font-size:6.15px;color:#cacaca;font-weight:normal;white-space:nowrap;transform:translateX(-50%);text-shadow:0 0 0.150px #cacaca;">opmaak</div>
<svg style="position:absolute;left:472.45px;top:40px;" width="18" height="15" viewBox="0 0 18 15" ><rect x="0.400" y="0.400" width="15.400" height="12.200" rx="0.800" fill="none" stroke="#7d7d7d" stroke-width="0.700"/><path d="M4.200 0.400 V12.600 M8 0.400 V12.600 M11.800 0.400 V12.600 M0.400 3.300 H15.800 M0.400 6.400 H15.800 M0.400 9.500 H15.800" stroke="#7d7d7d" stroke-width="0.550"/><rect x="5" y="4" width="10.400" height="8.300" fill="#2459a6"/><path d="M15.800 3.200 L8.500 12" stroke="#2b2b2c" stroke-width="3.200"/><path d="M16.300 3.600 L9 12" stroke="#a5a5a5" stroke-width="0.700"/><path d="M14.500 2.800 L7.300 11.300" stroke="#a5a5a5" stroke-width="0.700"/><ellipse cx="6.800" cy="12.800" rx="2.400" ry="1.500" fill="#2459a6" transform="rotate(-35 6.800 12.800)"/></svg>
<svg style="position:absolute;left:491.45px;top:44.925px;" width="4.0" height="2.75" viewBox="0 0 4.0 2.75" ><path d="M0.500 0.500 L2.0 2.25 L3.5 0.500" fill="none" stroke="#d2d2d2" stroke-width="1" stroke-linecap="round" stroke-linejoin="round"/></svg>
<div style="position:absolute;left:483.45px;top:50.6px;height:20px;line-height:20px;font-size:6.15px;color:#cacaca;font-weight:normal;white-space:nowrap;transform:translateX(-50%);text-shadow:0 0 0.150px #cacaca;">Opmaken</div>
<div style="position:absolute;left:483.45px;top:57.2px;height:20px;line-height:20px;font-size:6.15px;color:#cacaca;font-weight:normal;white-space:nowrap;transform:translateX(-50%);text-shadow:0 0 0.150px #cacaca;">als tabel</div>
<svg style="position:absolute;left:501.15px;top:40px;" width="18" height="15" viewBox="0 0 18 15" ><rect x="0.400" y="0.400" width="15.400" height="12.200" rx="0.800" fill="none" stroke="#7d7d7d" stroke-width="0.700"/><path d="M2.600 0.400 V12.600 M0.400 2.600 H15.800 M0.400 10.200 H15.800" stroke="#7d7d7d" stroke-width="0.550"/><rect x="3.200" y="3.100" width="10.600" height="6.600" fill="#2459a6"/><path d="M15.800 3.200 L8.500 12" stroke="#2b2b2c" stroke-width="3.200"/><path d="M16.300 3.600 L9 12" stroke="#a5a5a5" stroke-width="0.700"/><path d="M14.500 2.800 L7.300 11.300" stroke="#a5a5a5" stroke-width="0.700"/><ellipse cx="6.800" cy="12.800" rx="2.400" ry="1.500" fill="#2459a6" transform="rotate(-35 6.800 12.800)"/></svg>
<svg style="position:absolute;left:520.25px;top:44.925px;" width="4.0" height="2.75" viewBox="0 0 4.0 2.75" ><path d="M0.500 0.500 L2.0 2.25 L3.5 0.500" fill="none" stroke="#d2d2d2" stroke-width="1" stroke-linecap="round" stroke-linejoin="round"/></svg>
<div style="position:absolute;left:512.35px;top:50.6px;height:20px;line-height:20px;font-size:6.15px;color:#cacaca;font-weight:normal;white-space:nowrap;transform:translateX(-50%);text-shadow:0 0 0.150px #cacaca;">Celstijlen</div>
<div style="position:absolute;left:531.9px;top:36.2px;width:0.7px;height:32.8px;background:#454546;"></div>
<svg style="position:absolute;left:538.75px;top:38px;" width="10" height="8.5" viewBox="0 0 10 8.5" ><rect x="0.400" y="0.400" width="9.200" height="7.700" rx="0.800" fill="none" stroke="#7d7d7d" stroke-width="0.700"/><path d="M3.400 0.400 V8.100 M6.600 0.400 V8.100 M0.400 2.900 H9.600 M0.400 5.600 H9.600" stroke="#7d7d7d" stroke-width="0.500"/><rect x="1" y="3.100" width="8" height="2.300" fill="#2a5fb2"/><path d="M1.200 4.250 H3 M2.200 3.500 L3 4.250 L2.200 5" stroke="#9cc2f0" stroke-width="0.450" fill="none"/></svg>
<div style="position:absolute;left:551.75px;top:32px;height:20px;line-height:20px;font-size:6px;color:#cacaca;font-weight:normal;white-space:nowrap;text-shadow:0 0 0.150px #cacaca;">Invoegen</div>
<svg style="position:absolute;left:579.35px;top:41.025px;" width="4.0" height="2.75" viewBox="0 0 4.0 2.75" ><path d="M0.500 0.500 L2.0 2.25 L3.5 0.500" fill="none" stroke="#d2d2d2" stroke-width="1" stroke-linecap="round" stroke-linejoin="round"/></svg>
<svg style="position:absolute;left:538.75px;top:50px;" width="10" height="8.5" viewBox="0 0 10 8.5" ><rect x="0.400" y="0.400" width="9.200" height="7.700" rx="0.800" fill="none" stroke="#7d7d7d" stroke-width="0.700"/><path d="M3.400 0.400 V8.100 M6.600 0.400 V8.100 M0.400 2.900 H9.600 M0.400 5.600 H9.600" stroke="#7d7d7d" stroke-width="0.500"/><rect x="2" y="3.100" width="3.800" height="2.300" fill="#2a5fb2"/><path d="M6.600 3.200 L8.600 5.300 M8.600 3.200 L6.600 5.300" stroke="#d0402c" stroke-width="0.700"/></svg>
<div style="position:absolute;left:551.75px;top:44px;height:20px;line-height:20px;font-size:6.12px;color:#cacaca;font-weight:normal;white-space:nowrap;text-shadow:0 0 0.150px #cacaca;">Verwijderen</div>
<svg style="position:absolute;left:586.75px;top:53.025px;" width="4.0" height="2.75" viewBox="0 0 4.0 2.75" ><path d="M0.500 0.500 L2.0 2.25 L3.5 0.500" fill="none" stroke="#d2d2d2" stroke-width="1" stroke-linecap="round" stroke-linejoin="round"/></svg>
<svg style="position:absolute;left:538.75px;top:62.2px;" width="10" height="8.5" viewBox="0 0 10 8.5" ><rect x="0.400" y="0.400" width="9.200" height="7.700" rx="0.800" fill="none" stroke="#7d7d7d" stroke-width="0.700"/><path d="M3.400 0.400 V8.100 M6.600 0.400 V8.100 M0.400 2.900 H9.600 M0.400 5.600 H9.600" stroke="#7d7d7d" stroke-width="0.500"/><rect x="3.600" y="3.100" width="2.800" height="2.300" fill="#2a5fb2"/><path d="M2 0.200 H8" stroke="#2a66c0" stroke-width="0.600"/></svg>
<div style="position:absolute;left:551.75px;top:56.2px;height:20px;line-height:20px;font-size:6.1px;color:#cacaca;font-weight:normal;white-space:nowrap;text-shadow:0 0 0.150px #cacaca;">Opmaak</div>
<svg style="position:absolute;left:576.75px;top:65.225px;" width="4.0" height="2.75" viewBox="0 0 4.0 2.75" ><path d="M0.500 0.500 L2.0 2.25 L3.5 0.500" fill="none" stroke="#d2d2d2" stroke-width="1" stroke-linecap="round" stroke-linejoin="round"/></svg>
<div style="position:absolute;left:597.8px;top:36.2px;width:0.7px;height:32.8px;background:#454546;"></div>
<svg style="position:absolute;left:605.25px;top:37.5px;" width="9" height="9.5" viewBox="0 0 9 9.5" ><path d="M7.600 2 V0.800 H1 L4.600 4.600 L1 8.500 H7.600 V7.300" fill="none" stroke="#a5a5a5" stroke-width="0.800"/></svg>
<svg style="position:absolute;left:616.55px;top:41.025px;" width="4.0" height="2.75" viewBox="0 0 4.0 2.75" ><path d="M0.500 0.500 L2.0 2.25 L3.5 0.500" fill="none" stroke="#d2d2d2" stroke-width="1" stroke-linecap="round" stroke-linejoin="round"/></svg>
<svg style="position:absolute;left:604.55px;top:49.3px;" width="10" height="9" viewBox="0 0 10 9" ><rect x="0.400" y="0.400" width="8.800" height="8" fill="none" stroke="#8d8d8d" stroke-width="0.800"/><path d="M0.400 2 H9.200" stroke="#8d8d8d" stroke-width="0.600"/><path d="M4.800 3 V7 M3.300 5.600 L4.800 7.100 L6.300 5.600" stroke="#3a7bd0" stroke-width="0.850" fill="none"/></svg>
<svg style="position:absolute;left:616.55px;top:53.025px;" width="4.0" height="2.75" viewBox="0 0 4.0 2.75" ><path d="M0.500 0.500 L2.0 2.25 L3.5 0.500" fill="none" stroke="#d2d2d2" stroke-width="1" stroke-linecap="round" stroke-linejoin="round"/></svg>
<svg style="position:absolute;left:604.55px;top:61.5px;" width="10" height="9.5" viewBox="0 0 10 9.5" ><path d="M5.800 0.800 L9 3.800 L4.400 8.500 L1.200 5.500 Z" fill="none" stroke="#c0c0c0" stroke-width="0.700"/><path d="M3.300 3.400 L6.500 6.400 L4.400 8.500 L1.200 5.500 Z" fill="#8c2072"/></svg>
<svg style="position:absolute;left:616.55px;top:65.225px;" width="4.0" height="2.75" viewBox="0 0 4.0 2.75" ><path d="M0.500 0.500 L2.0 2.25 L3.5 0.500" fill="none" stroke="#d2d2d2" stroke-width="1" stroke-linecap="round" stroke-linejoin="round"/></svg>
<div style="position:absolute;left:629.35px;top:32.3px;height:20px;line-height:20px;font-size:8.3px;color:#3873c8;font-weight:normal;white-space:nowrap;transform:translateX(-50%);text-shadow:0 0 0.300px #3873c8;">A</div>
<div style="position:absolute;left:629.35px;top:40.3px;height:20px;line-height:20px;font-size:8.3px;color:#939393;font-weight:normal;white-space:nowrap;transform:translateX(-50%);">Z</div>
<svg style="position:absolute;left:632.75px;top:41.5px;" width="10.5" height="11.5" viewBox="0 0 10.5 11.5" ><path d="M0.600 0.800 H9.600 L6.200 4.800 V9 L4 10 V4.800 Z" fill="none" stroke="#9a9a9a" stroke-width="0.800" stroke-linejoin="round"/><path d="M4.300 7 H6" stroke="#9a9a9a" stroke-width="0.600"/></svg>
<svg style="position:absolute;left:645.55px;top:44.925px;" width="4.0" height="2.75" viewBox="0 0 4.0 2.75" ><path d="M0.500 0.500 L2.0 2.25 L3.5 0.500" fill="none" stroke="#d2d2d2" stroke-width="1" stroke-linecap="round" stroke-linejoin="round"/></svg>
<div style="position:absolute;left:637.75px;top:50.6px;height:20px;line-height:20px;font-size:6.15px;color:#cacaca;font-weight:normal;white-space:nowrap;transform:translateX(-50%);text-shadow:0 0 0.150px #cacaca;">Sorteren</div>
<div style="position:absolute;left:637.75px;top:57.2px;height:20px;line-height:20px;font-size:6.15px;color:#cacaca;font-weight:normal;white-space:nowrap;transform:translateX(-50%);text-shadow:0 0 0.150px #cacaca;">en filteren</div>
<svg style="position:absolute;left:657.25px;top:37.5px;" width="18" height="18" viewBox="0 0 18 18" ><circle cx="10.600" cy="6.500" r="5.400" fill="none" stroke="#8d8d8d" stroke-width="0.800"/><path d="M6.800 10.400 L1 17" stroke="#8d8d8d" stroke-width="0.800"/></svg>
<svg style="position:absolute;left:677.05px;top:44.925px;" width="4.0" height="2.75" viewBox="0 0 4.0 2.75" ><path d="M0.500 0.500 L2.0 2.25 L3.5 0.500" fill="none" stroke="#d2d2d2" stroke-width="1" stroke-linecap="round" stroke-linejoin="round"/></svg>
<div style="position:absolute;left:669.55px;top:50.6px;height:20px;line-height:20px;font-size:6.15px;color:#cacaca;font-weight:normal;white-space:nowrap;transform:translateX(-50%);text-shadow:0 0 0.150px #cacaca;">Zoeken en</div>
<div style="position:absolute;left:669.55px;top:57.2px;height:20px;line-height:20px;font-size:6.15px;color:#cacaca;font-weight:normal;white-space:nowrap;transform:translateX(-50%);text-shadow:0 0 0.150px #cacaca;">selecteren</div>
<div style="position:absolute;left:691.0px;top:36.2px;width:0.7px;height:32.8px;background:#454546;"></div>
<svg style="position:absolute;left:710.75px;top:37.5px;" width="17" height="17" viewBox="0 0 17 17" ><path d="M1 2 H8 M1 2 V15.500 H12 V9.500" fill="none" stroke="#22384e" stroke-width="0.800"/><path d="M9.800 3.200 L12.800 0.900 L15.300 3.600 L12.400 6 Z" fill="none" stroke="#263e58" stroke-width="0.700"/><path d="M5 6.200 L9.600 10.800 L7.400 12.800 L3.200 8.200 Z" fill="#27384a"/><path d="M8.300 3.800 L12 7.400" stroke="#2b5890" stroke-width="1.200"/></svg>
<svg style="position:absolute;left:728.95px;top:45.225px;" width="4.0" height="2.75" viewBox="0 0 4.0 2.75" ><path d="M0.500 0.500 L2.0 2.25 L3.5 0.500" fill="none" stroke="#d2d2d2" stroke-width="1" stroke-linecap="round" stroke-linejoin="round"/></svg>
<div style="position:absolute;left:721.15px;top:50.6px;height:20px;line-height:20px;font-size:6.15px;color:#646464;font-weight:normal;white-space:nowrap;transform:translateX(-50%);text-shadow:0 0 0.150px #646464;">Vertrouwelijkheid</div>
<div style="position:absolute;left:0.0px;top:89.3px;width:767.65px;height:1px;background:#f2f2f2;"></div>
<div style="position:absolute;left:0.0px;top:90.3px;width:767.65px;height:11.1px;background:#101010;"></div>
<div style="position:absolute;left:11.85px;top:102px;width:755.8px;height:338px;background:#ffffff;"></div>
<div style="position:absolute;left:0.0px;top:102px;width:11.850000000000001px;height:338px;background:#101010;"></div>
<svg style="position:absolute;left:0;top:0" width="767.65" height="467" viewBox="0 0 767.65 467"><path d="M47.21 102 V440" stroke="#d9d9d9" stroke-width="0.800"/><path d="M82.57 102 V440" stroke="#d9d9d9" stroke-width="0.800"/><path d="M117.93 102 V440" stroke="#d9d9d9" stroke-width="0.800"/><path d="M153.29 102 V440" stroke="#d9d9d9" stroke-width="0.800"/><path d="M188.65 102 V440" stroke="#d9d9d9" stroke-width="0.800"/><path d="M224.01 102 V440" stroke="#d9d9d9" stroke-width="0.800"/><path d="M259.37 102 V440" stroke="#d9d9d9" stroke-width="0.800"/><path d="M294.73 102 V440" stroke="#d9d9d9" stroke-width="0.800"/><path d="M330.09 102 V440" stroke="#d9d9d9" stroke-width="0.800"/><path d="M365.45 102 V440" stroke="#d9d9d9" stroke-width="0.800"/><path d="M400.81 102 V440" stroke="#d9d9d9" stroke-width="0.800"/><path d="M436.17 102 V440" stroke="#d9d9d9" stroke-width="0.800"/><path d="M471.53 102 V440" stroke="#d9d9d9" stroke-width="0.800"/><path d="M506.89 102 V440" stroke="#d9d9d9" stroke-width="0.800"/><path d="M542.25 102 V440" stroke="#d9d9d9" stroke-width="0.800"/><path d="M577.61 102 V440" stroke="#d9d9d9" stroke-width="0.800"/><path d="M612.97 102 V440" stroke="#d9d9d9" stroke-width="0.800"/><path d="M648.33 102 V440" stroke="#d9d9d9" stroke-width="0.800"/><path d="M683.69 102 V440" stroke="#d9d9d9" stroke-width="0.800"/><path d="M719.05 102 V440" stroke="#d9d9d9" stroke-width="0.800"/><path d="M754.41 102 V440" stroke="#d9d9d9" stroke-width="0.800"/><path d="M789.77 102 V440" stroke="#d9d9d9" stroke-width="0.800"/><path d="M11.850000000000001 110.70 H767.65" stroke="#dedede" stroke-width="0.800"/><path d="M11.850000000000001 119.40 H767.65" stroke="#dedede" stroke-width="0.800"/><path d="M11.850000000000001 128.10 H767.65" stroke="#dedede" stroke-width="0.800"/><path d="M11.850000000000001 136.80 H767.65" stroke="#dedede" stroke-width="0.800"/><path d="M11.850000000000001 145.50 H767.65" stroke="#dedede" stroke-width="0.800"/><path d="M11.850000000000001 154.20 H767.65" stroke="#dedede" stroke-width="0.800"/><path d="M11.850000000000001 162.90 H767.65" stroke="#dedede" stroke-width="0.800"/><path d="M11.850000000000001 171.60 H767.65" stroke="#dedede" stroke-width="0.800"/><path d="M11.850000000000001 180.30 H767.65" stroke="#dedede" stroke-width="0.800"/><path d="M11.850000000000001 189.00 H767.65" stroke="#dedede" stroke-width="0.800"/><path d="M11.850000000000001 197.70 H767.65" stroke="#dedede" stroke-width="0.800"/><path d="M11.850000000000001 206.40 H767.65" stroke="#dedede" stroke-width="0.800"/><path d="M11.850000000000001 215.10 H767.65" stroke="#dedede" stroke-width="0.800"/><path d="M11.850000000000001 223.80 H767.65" stroke="#dedede" stroke-width="0.800"/><path d="M11.850000000000001 232.50 H767.65" stroke="#dedede" stroke-width="0.800"/><path d="M11.850000000000001 241.20 H767.65" stroke="#dedede" stroke-width="0.800"/><path d="M11.850000000000001 249.90 H767.65" stroke="#dedede" stroke-width="0.800"/><path d="M11.850000000000001 258.60 H767.65" stroke="#dedede" stroke-width="0.800"/><path d="M11.850000000000001 267.30 H767.65" stroke="#dedede" stroke-width="0.800"/><path d="M11.850000000000001 276.00 H767.65" stroke="#dedede" stroke-width="0.800"/><path d="M11.850000000000001 284.70 H767.65" stroke="#dedede" stroke-width="0.800"/><path d="M11.850000000000001 293.40 H767.65" stroke="#dedede" stroke-width="0.800"/><path d="M11.850000000000001 302.10 H767.65" stroke="#dedede" stroke-width="0.800"/><path d="M11.850000000000001 310.80 H767.65" stroke="#dedede" stroke-width="0.800"/><path d="M11.850000000000001 319.50 H767.65" stroke="#dedede" stroke-width="0.800"/><path d="M11.850000000000001 328.20 H767.65" stroke="#dedede" stroke-width="0.800"/><path d="M11.850000000000001 336.90 H767.65" stroke="#dedede" stroke-width="0.800"/><path d="M11.850000000000001 345.60 H767.65" stroke="#dedede" stroke-width="0.800"/><path d="M11.850000000000001 354.30 H767.65" stroke="#dedede" stroke-width="0.800"/><path d="M11.850000000000001 363.00 H767.65" stroke="#dedede" stroke-width="0.800"/><path d="M11.850000000000001 371.70 H767.65" stroke="#dedede" stroke-width="0.800"/><path d="M11.850000000000001 380.40 H767.65" stroke="#dedede" stroke-width="0.800"/><path d="M11.850000000000001 389.10 H767.65" stroke="#dedede" stroke-width="0.800"/><path d="M11.850000000000001 397.80 H767.65" stroke="#dedede" stroke-width="0.800"/><path d="M11.850000000000001 406.50 H767.65" stroke="#dedede" stroke-width="0.800"/><path d="M11.850000000000001 415.20 H767.65" stroke="#dedede" stroke-width="0.800"/><path d="M11.850000000000001 423.90 H767.65" stroke="#dedede" stroke-width="0.800"/><path d="M11.850000000000001 432.60 H767.65" stroke="#dedede" stroke-width="0.800"/><path d="M11.850000000000001 441.30 H767.65" stroke="#dedede" stroke-width="0.800"/><path d="M11.85 90.3 V102" stroke="#4c4c4c" stroke-width="0.900"/><path d="M47.21 90.3 V102" stroke="#4c4c4c" stroke-width="0.900"/><path d="M82.57 90.3 V102" stroke="#4c4c4c" stroke-width="0.900"/><path d="M117.93 90.3 V102" stroke="#4c4c4c" stroke-width="0.900"/><path d="M153.29 90.3 V102" stroke="#4c4c4c" stroke-width="0.900"/><path d="M188.65 90.3 V102" stroke="#4c4c4c" stroke-width="0.900"/><path d="M224.01 90.3 V102" stroke="#4c4c4c" stroke-width="0.900"/><path d="M259.37 90.3 V102" stroke="#4c4c4c" stroke-width="0.900"/><path d="M294.73 90.3 V102" stroke="#4c4c4c" stroke-width="0.900"/><path d="M330.09 90.3 V102" stroke="#4c4c4c" stroke-width="0.900"/><path d="M365.45 90.3 V102" stroke="#4c4c4c" stroke-width="0.900"/><path d="M400.81 90.3 V102" stroke="#4c4c4c" stroke-width="0.900"/><path d="M436.17 90.3 V102" stroke="#4c4c4c" stroke-width="0.900"/><path d="M471.53 90.3 V102" stroke="#4c4c4c" stroke-width="0.900"/><path d="M506.89 90.3 V102" stroke="#4c4c4c" stroke-width="0.900"/><path d="M542.25 90.3 V102" stroke="#4c4c4c" stroke-width="0.900"/><path d="M577.61 90.3 V102" stroke="#4c4c4c" stroke-width="0.900"/><path d="M612.97 90.3 V102" stroke="#4c4c4c" stroke-width="0.900"/><path d="M648.33 90.3 V102" stroke="#4c4c4c" stroke-width="0.900"/><path d="M683.69 90.3 V102" stroke="#4c4c4c" stroke-width="0.900"/><path d="M719.05 90.3 V102" stroke="#4c4c4c" stroke-width="0.900"/><path d="M754.41 90.3 V102" stroke="#4c4c4c" stroke-width="0.900"/><path d="M789.77 90.3 V102" stroke="#4c4c4c" stroke-width="0.900"/><path d="M0 102.00 H11.850000000000001" stroke="#3a3a3a" stroke-width="0.600"/><path d="M0 110.70 H11.850000000000001" stroke="#3a3a3a" stroke-width="0.600"/><path d="M0 119.40 H11.850000000000001" stroke="#3a3a3a" stroke-width="0.600"/><path d="M0 128.10 H11.850000000000001" stroke="#3a3a3a" stroke-width="0.600"/><path d="M0 136.80 H11.850000000000001" stroke="#3a3a3a" stroke-width="0.600"/><path d="M0 145.50 H11.850000000000001" stroke="#3a3a3a" stroke-width="0.600"/><path d="M0 154.20 H11.850000000000001" stroke="#3a3a3a" stroke-width="0.600"/><path d="M0 162.90 H11.850000000000001" stroke="#3a3a3a" stroke-width="0.600"/><path d="M0 171.60 H11.850000000000001" stroke="#3a3a3a" stroke-width="0.600"/><path d="M0 180.30 H11.850000000000001" stroke="#3a3a3a" stroke-width="0.600"/><path d="M0 189.00 H11.850000000000001" stroke="#3a3a3a" stroke-width="0.600"/><path d="M0 197.70 H11.850000000000001" stroke="#3a3a3a" stroke-width="0.600"/><path d="M0 206.40 H11.850000000000001" stroke="#3a3a3a" stroke-width="0.600"/><path d="M0 215.10 H11.850000000000001" stroke="#3a3a3a" stroke-width="0.600"/><path d="M0 223.80 H11.850000000000001" stroke="#3a3a3a" stroke-width="0.600"/><path d="M0 232.50 H11.850000000000001" stroke="#3a3a3a" stroke-width="0.600"/><path d="M0 241.20 H11.850000000000001" stroke="#3a3a3a" stroke-width="0.600"/><path d="M0 249.90 H11.850000000000001" stroke="#3a3a3a" stroke-width="0.600"/><path d="M0 258.60 H11.850000000000001" stroke="#3a3a3a" stroke-width="0.600"/><path d="M0 267.30 H11.850000000000001" stroke="#3a3a3a" stroke-width="0.600"/><path d="M0 276.00 H11.850000000000001" stroke="#3a3a3a" stroke-width="0.600"/><path d="M0 284.70 H11.850000000000001" stroke="#3a3a3a" stroke-width="0.600"/><path d="M0 293.40 H11.850000000000001" stroke="#3a3a3a" stroke-width="0.600"/><path d="M0 302.10 H11.850000000000001" stroke="#3a3a3a" stroke-width="0.600"/><path d="M0 310.80 H11.850000000000001" stroke="#3a3a3a" stroke-width="0.600"/><path d="M0 319.50 H11.850000000000001" stroke="#3a3a3a" stroke-width="0.600"/><path d="M0 328.20 H11.850000000000001" stroke="#3a3a3a" stroke-width="0.600"/><path d="M0 336.90 H11.850000000000001" stroke="#3a3a3a" stroke-width="0.600"/><path d="M0 345.60 H11.850000000000001" stroke="#3a3a3a" stroke-width="0.600"/><path d="M0 354.30 H11.850000000000001" stroke="#3a3a3a" stroke-width="0.600"/><path d="M0 363.00 H11.850000000000001" stroke="#3a3a3a" stroke-width="0.600"/><path d="M0 371.70 H11.850000000000001" stroke="#3a3a3a" stroke-width="0.600"/><path d="M0 380.40 H11.850000000000001" stroke="#3a3a3a" stroke-width="0.600"/><path d="M0 389.10 H11.850000000000001" stroke="#3a3a3a" stroke-width="0.600"/><path d="M0 397.80 H11.850000000000001" stroke="#3a3a3a" stroke-width="0.600"/><path d="M0 406.50 H11.850000000000001" stroke="#3a3a3a" stroke-width="0.600"/><path d="M0 415.20 H11.850000000000001" stroke="#3a3a3a" stroke-width="0.600"/><path d="M0 423.90 H11.850000000000001" stroke="#3a3a3a" stroke-width="0.600"/><path d="M0 432.60 H11.850000000000001" stroke="#3a3a3a" stroke-width="0.600"/><path d="M0 441.30 H11.850000000000001" stroke="#3a3a3a" stroke-width="0.600"/></svg>
<svg style="position:absolute;left:0.0px;top:90.3px;" width="11.850000000000001" height="11.1" viewBox="0 0 11.850000000000001 11.1" ><path d="M2.500 9.500 H10 V2.500 Z" fill="#5a5a5a"/></svg>
<div style="position:absolute;left:47.51px;top:90.3px;width:35.06px;height:11.1px;background:#5b5b5b;"></div>
<div style="position:absolute;left:0.0px;top:102.2px;width:11.450000000000001px;height:8.299999999999999px;background:#5b5b5b;"></div>
<div style="position:absolute;left:11.15px;top:102px;width:0.9px;height:8.7px;background:#1e7b45;"></div>
<div style="position:absolute;left:29.53px;top:86.9px;height:20px;line-height:20px;font-size:6.3px;color:#f0f0f0;font-weight:bold;white-space:nowrap;transform:translateX(-50%);">A</div>
<div style="position:absolute;left:64.89px;top:86.9px;height:20px;line-height:20px;font-size:6.3px;color:#f0f0f0;font-weight:bold;white-space:nowrap;transform:translateX(-50%);">B</div>
<div style="position:absolute;left:100.25px;top:86.9px;height:20px;line-height:20px;font-size:6.3px;color:#f0f0f0;font-weight:bold;white-space:nowrap;transform:translateX(-50%);">C</div>
<div style="position:absolute;left:135.61px;top:86.9px;height:20px;line-height:20px;font-size:6.3px;color:#f0f0f0;font-weight:bold;white-space:nowrap;transform:translateX(-50%);">D</div>
<div style="position:absolute;left:170.97px;top:86.9px;height:20px;line-height:20px;font-size:6.3px;color:#f0f0f0;font-weight:bold;white-space:nowrap;transform:translateX(-50%);">E</div>
<div style="position:absolute;left:206.33px;top:86.9px;height:20px;line-height:20px;font-size:6.3px;color:#f0f0f0;font-weight:bold;white-space:nowrap;transform:translateX(-50%);">F</div>
<div style="position:absolute;left:241.69px;top:86.9px;height:20px;line-height:20px;font-size:6.3px;color:#f0f0f0;font-weight:bold;white-space:nowrap;transform:translateX(-50%);">G</div>
<div style="position:absolute;left:277.05px;top:86.9px;height:20px;line-height:20px;font-size:6.3px;color:#f0f0f0;font-weight:bold;white-space:nowrap;transform:translateX(-50%);">H</div>
<div style="position:absolute;left:312.41px;top:86.9px;height:20px;line-height:20px;font-size:6.3px;color:#f0f0f0;font-weight:bold;white-space:nowrap;transform:translateX(-50%);">I</div>
<div style="position:absolute;left:347.77px;top:86.9px;height:20px;line-height:20px;font-size:6.3px;color:#f0f0f0;font-weight:bold;white-space:nowrap;transform:translateX(-50%);">J</div>
<div style="position:absolute;left:383.13px;top:86.9px;height:20px;line-height:20px;font-size:6.3px;color:#f0f0f0;font-weight:bold;white-space:nowrap;transform:translateX(-50%);">K</div>
<div style="position:absolute;left:418.49px;top:86.9px;height:20px;line-height:20px;font-size:6.3px;color:#f0f0f0;font-weight:bold;white-space:nowrap;transform:translateX(-50%);">L</div>
<div style="position:absolute;left:453.85px;top:86.9px;height:20px;line-height:20px;font-size:6.3px;color:#f0f0f0;font-weight:bold;white-space:nowrap;transform:translateX(-50%);">M</div>
<div style="position:absolute;left:489.21px;top:86.9px;height:20px;line-height:20px;font-size:6.3px;color:#f0f0f0;font-weight:bold;white-space:nowrap;transform:translateX(-50%);">N</div>
<div style="position:absolute;left:524.57px;top:86.9px;height:20px;line-height:20px;font-size:6.3px;color:#f0f0f0;font-weight:bold;white-space:nowrap;transform:translateX(-50%);">O</div>
<div style="position:absolute;left:559.93px;top:86.9px;height:20px;line-height:20px;font-size:6.3px;color:#f0f0f0;font-weight:bold;white-space:nowrap;transform:translateX(-50%);">P</div>
<div style="position:absolute;left:595.29px;top:86.9px;height:20px;line-height:20px;font-size:6.3px;color:#f0f0f0;font-weight:bold;white-space:nowrap;transform:translateX(-50%);">Q</div>
<div style="position:absolute;left:630.65px;top:86.9px;height:20px;line-height:20px;font-size:6.3px;color:#f0f0f0;font-weight:bold;white-space:nowrap;transform:translateX(-50%);">R</div>
<div style="position:absolute;left:666.01px;top:86.9px;height:20px;line-height:20px;font-size:6.3px;color:#f0f0f0;font-weight:bold;white-space:nowrap;transform:translateX(-50%);">S</div>
<div style="position:absolute;left:701.37px;top:86.9px;height:20px;line-height:20px;font-size:6.3px;color:#f0f0f0;font-weight:bold;white-space:nowrap;transform:translateX(-50%);">T</div>
<div style="position:absolute;left:736.73px;top:86.9px;height:20px;line-height:20px;font-size:6.3px;color:#f0f0f0;font-weight:bold;white-space:nowrap;transform:translateX(-50%);">U</div>
<div style="position:absolute;left:5.625px;top:97.05px;height:20px;line-height:20px;font-size:5.9px;color:#fff;font-weight:bold;white-space:nowrap;transform:translateX(-50%);letter-spacing:-0.3px;">1</div>
<div style="position:absolute;left:5.625px;top:105.75px;height:20px;line-height:20px;font-size:5.9px;color:#fff;font-weight:bold;white-space:nowrap;transform:translateX(-50%);letter-spacing:-0.3px;">2</div>
<div style="position:absolute;left:5.625px;top:114.45px;height:20px;line-height:20px;font-size:5.9px;color:#fff;font-weight:bold;white-space:nowrap;transform:translateX(-50%);letter-spacing:-0.3px;">3</div>
<div style="position:absolute;left:5.625px;top:123.15px;height:20px;line-height:20px;font-size:5.9px;color:#fff;font-weight:bold;white-space:nowrap;transform:translateX(-50%);letter-spacing:-0.3px;">4</div>
<div style="position:absolute;left:5.625px;top:131.85px;height:20px;line-height:20px;font-size:5.9px;color:#fff;font-weight:bold;white-space:nowrap;transform:translateX(-50%);letter-spacing:-0.3px;">5</div>
<div style="position:absolute;left:5.625px;top:140.55px;height:20px;line-height:20px;font-size:5.9px;color:#fff;font-weight:bold;white-space:nowrap;transform:translateX(-50%);letter-spacing:-0.3px;">6</div>
<div style="position:absolute;left:5.625px;top:149.25px;height:20px;line-height:20px;font-size:5.9px;color:#fff;font-weight:bold;white-space:nowrap;transform:translateX(-50%);letter-spacing:-0.3px;">7</div>
<div style="position:absolute;left:5.625px;top:157.95px;height:20px;line-height:20px;font-size:5.9px;color:#fff;font-weight:bold;white-space:nowrap;transform:translateX(-50%);letter-spacing:-0.3px;">8</div>
<div style="position:absolute;left:5.625px;top:166.65px;height:20px;line-height:20px;font-size:5.9px;color:#fff;font-weight:bold;white-space:nowrap;transform:translateX(-50%);letter-spacing:-0.3px;">9</div>
<div style="position:absolute;left:5.625px;top:175.35px;height:20px;line-height:20px;font-size:5.9px;color:#fff;font-weight:bold;white-space:nowrap;transform:translateX(-50%);letter-spacing:-0.3px;">10</div>
<div style="position:absolute;left:5.625px;top:184.05px;height:20px;line-height:20px;font-size:5.9px;color:#fff;font-weight:bold;white-space:nowrap;transform:translateX(-50%);letter-spacing:-0.3px;">11</div>
<div style="position:absolute;left:5.625px;top:192.75px;height:20px;line-height:20px;font-size:5.9px;color:#fff;font-weight:bold;white-space:nowrap;transform:translateX(-50%);letter-spacing:-0.3px;">12</div>
<div style="position:absolute;left:5.625px;top:201.45px;height:20px;line-height:20px;font-size:5.9px;color:#fff;font-weight:bold;white-space:nowrap;transform:translateX(-50%);letter-spacing:-0.3px;">13</div>
<div style="position:absolute;left:5.625px;top:210.15px;height:20px;line-height:20px;font-size:5.9px;color:#fff;font-weight:bold;white-space:nowrap;transform:translateX(-50%);letter-spacing:-0.3px;">14</div>
<div style="position:absolute;left:5.625px;top:218.85px;height:20px;line-height:20px;font-size:5.9px;color:#fff;font-weight:bold;white-space:nowrap;transform:translateX(-50%);letter-spacing:-0.3px;">15</div>
<div style="position:absolute;left:5.625px;top:227.55px;height:20px;line-height:20px;font-size:5.9px;color:#fff;font-weight:bold;white-space:nowrap;transform:translateX(-50%);letter-spacing:-0.3px;">16</div>
<div style="position:absolute;left:5.625px;top:236.25px;height:20px;line-height:20px;font-size:5.9px;color:#fff;font-weight:bold;white-space:nowrap;transform:translateX(-50%);letter-spacing:-0.3px;">17</div>
<div style="position:absolute;left:5.625px;top:244.95px;height:20px;line-height:20px;font-size:5.9px;color:#fff;font-weight:bold;white-space:nowrap;transform:translateX(-50%);letter-spacing:-0.3px;">18</div>
<div style="position:absolute;left:5.625px;top:253.64999999999998px;height:20px;line-height:20px;font-size:5.9px;color:#fff;font-weight:bold;white-space:nowrap;transform:translateX(-50%);letter-spacing:-0.3px;">19</div>
<div style="position:absolute;left:5.625px;top:262.35px;height:20px;line-height:20px;font-size:5.9px;color:#fff;font-weight:bold;white-space:nowrap;transform:translateX(-50%);letter-spacing:-0.3px;">20</div>
<div style="position:absolute;left:5.625px;top:271.05px;height:20px;line-height:20px;font-size:5.9px;color:#fff;font-weight:bold;white-space:nowrap;transform:translateX(-50%);letter-spacing:-0.3px;">21</div>
<div style="position:absolute;left:5.625px;top:279.75px;height:20px;line-height:20px;font-size:5.9px;color:#fff;font-weight:bold;white-space:nowrap;transform:translateX(-50%);letter-spacing:-0.3px;">22</div>
<div style="position:absolute;left:5.625px;top:288.45px;height:20px;line-height:20px;font-size:5.9px;color:#fff;font-weight:bold;white-space:nowrap;transform:translateX(-50%);letter-spacing:-0.3px;">23</div>
<div style="position:absolute;left:5.625px;top:297.15px;height:20px;line-height:20px;font-size:5.9px;color:#fff;font-weight:bold;white-space:nowrap;transform:translateX(-50%);letter-spacing:-0.3px;">24</div>
<div style="position:absolute;left:5.625px;top:305.85px;height:20px;line-height:20px;font-size:5.9px;color:#fff;font-weight:bold;white-space:nowrap;transform:translateX(-50%);letter-spacing:-0.3px;">25</div>
<div style="position:absolute;left:5.625px;top:314.55px;height:20px;line-height:20px;font-size:5.9px;color:#fff;font-weight:bold;white-space:nowrap;transform:translateX(-50%);letter-spacing:-0.3px;">26</div>
<div style="position:absolute;left:5.625px;top:323.25px;height:20px;line-height:20px;font-size:5.9px;color:#fff;font-weight:bold;white-space:nowrap;transform:translateX(-50%);letter-spacing:-0.3px;">27</div>
<div style="position:absolute;left:5.625px;top:331.95px;height:20px;line-height:20px;font-size:5.9px;color:#fff;font-weight:bold;white-space:nowrap;transform:translateX(-50%);letter-spacing:-0.3px;">28</div>
<div style="position:absolute;left:5.625px;top:340.65px;height:20px;line-height:20px;font-size:5.9px;color:#fff;font-weight:bold;white-space:nowrap;transform:translateX(-50%);letter-spacing:-0.3px;">29</div>
<div style="position:absolute;left:5.625px;top:349.35px;height:20px;line-height:20px;font-size:5.9px;color:#fff;font-weight:bold;white-space:nowrap;transform:translateX(-50%);letter-spacing:-0.3px;">30</div>
<div style="position:absolute;left:5.625px;top:358.05px;height:20px;line-height:20px;font-size:5.9px;color:#fff;font-weight:bold;white-space:nowrap;transform:translateX(-50%);letter-spacing:-0.3px;">31</div>
<div style="position:absolute;left:5.625px;top:366.75px;height:20px;line-height:20px;font-size:5.9px;color:#fff;font-weight:bold;white-space:nowrap;transform:translateX(-50%);letter-spacing:-0.3px;">32</div>
<div style="position:absolute;left:5.625px;top:375.45px;height:20px;line-height:20px;font-size:5.9px;color:#fff;font-weight:bold;white-space:nowrap;transform:translateX(-50%);letter-spacing:-0.3px;">33</div>
<div style="position:absolute;left:5.625px;top:384.15px;height:20px;line-height:20px;font-size:5.9px;color:#fff;font-weight:bold;white-space:nowrap;transform:translateX(-50%);letter-spacing:-0.3px;">34</div>
<div style="position:absolute;left:5.625px;top:392.85px;height:20px;line-height:20px;font-size:5.9px;color:#fff;font-weight:bold;white-space:nowrap;transform:translateX(-50%);letter-spacing:-0.3px;">35</div>
<div style="position:absolute;left:5.625px;top:401.55px;height:20px;line-height:20px;font-size:5.9px;color:#fff;font-weight:bold;white-space:nowrap;transform:translateX(-50%);letter-spacing:-0.3px;">36</div>
<div style="position:absolute;left:5.625px;top:410.25px;height:20px;line-height:20px;font-size:5.9px;color:#fff;font-weight:bold;white-space:nowrap;transform:translateX(-50%);letter-spacing:-0.3px;">37</div>
<div style="position:absolute;left:5.625px;top:418.95px;height:20px;line-height:20px;font-size:5.9px;color:#fff;font-weight:bold;white-space:nowrap;transform:translateX(-50%);letter-spacing:-0.3px;">38</div>
<div style="position:absolute;left:5.625px;top:427.65px;height:20px;line-height:20px;font-size:5.9px;color:#fff;font-weight:bold;white-space:nowrap;transform:translateX(-50%);letter-spacing:-0.3px;">39</div>
<div style="position:absolute;left:46.21px;top:96.75px;height:20px;line-height:20px;font-size:6px;color:#262626;font-weight:normal;white-space:nowrap;transform:translateX(-100%);">03-03-2023</div>
<div style="position:absolute;left:46.71px;top:101.5px;width:36.36px;height:9.7px;background:transparent;border:1.100px solid #1e7b45;"></div>
<div style="position:absolute;left:81.07px;top:109.2px;width:3.2px;height:3.2px;background:#fff;"></div>
<div style="position:absolute;left:81.47px;top:109.6px;width:2.6px;height:2.6px;background:#1b6e3e;"></div>
<div style="position:absolute;left:0.0px;top:440px;width:767.65px;height:14.6px;background:#2d2d2e;"></div>
<div style="position:absolute;left:0.0px;top:439.7px;width:767.65px;height:0.6px;background:#1c1c1c;"></div>
<svg style="position:absolute;left:6.25px;top:443.5px;" width="7" height="8" viewBox="0 0 7 8" ><path d="M5.500 1 L1.500 4 L5.500 7 Z" fill="#5d5d5e"/></svg>
<svg style="position:absolute;left:18.25px;top:443.5px;" width="7" height="8" viewBox="0 0 7 8" ><path d="M1.500 1 L5.500 4 L1.500 7 Z" fill="#5d5d5e"/></svg>
<div style="position:absolute;left:32.5px;top:440px;width:43.2px;height:12px;background:#ffffff;border-radius:0 0 1.500px 1.500px;"></div>
<div style="position:absolute;left:54.05px;top:436.8px;height:20px;line-height:20px;font-size:6.3px;color:#1e7b45;font-weight:bold;white-space:nowrap;transform:translateX(-50%);">Blad1</div>
<div style="position:absolute;left:85.45px;top:436.5px;height:20px;line-height:20px;font-size:9.5px;color:#e6e6e6;font-weight:bold;white-space:nowrap;transform:translateX(-50%);">+</div>
<div style="position:absolute;left:95.85px;top:442px;width:0.7px;height:10px;background:#555;"></div>
<div style="position:absolute;left:0.0px;top:454.6px;width:767.65px;height:12.5px;background:linear-gradient(#424243,#39393a);"></div>
<div style="position:absolute;left:0.0px;top:454.3px;width:767.65px;height:0.6px;background:#1d1d1d;"></div>
<div style="position:absolute;left:12.75px;top:450.8px;height:20px;line-height:20px;font-size:6.88px;color:#e2e2e2;font-weight:normal;white-space:nowrap;text-shadow:0 0 0.300px #e2e2e2;">Gereed</div>
<svg style="position:absolute;left:45.25px;top:455.8px;" width="9" height="10" viewBox="0 0 9 10" ><circle cx="4" cy="1.600" r="1" fill="none" stroke="#f0f0f0" stroke-width="0.700"/><path d="M0.800 3.200 L3 3.900 H5 L7.200 3.200 M3 3.900 L2.400 8.800 M5 3.900 L5.200 6" stroke="#f0f0f0" stroke-width="0.800" fill="none" stroke-dasharray="1.300 0.450"/><path d="M4.500 7.600 L5.800 8.900 L8.400 6" stroke="#f0f0f0" stroke-width="0.850" fill="none"/></svg>
<div style="position:absolute;left:56.25px;top:450.8px;height:20px;line-height:20px;font-size:6.86px;color:#e2e2e2;font-weight:normal;white-space:nowrap;text-shadow:0 0 0.300px #e2e2e2;">Toegankelijkheid: alles in orde</div>
<div style="position:absolute;left:594.25px;top:455px;width:20px;height:12px;background:#5a5a5b;"></div>
<svg style="position:absolute;left:600.25px;top:457px;" width="8" height="8" viewBox="0 0 8 8" ><rect x="0.500" y="0.800" width="7" height="6.200" fill="none" stroke="#e6e6e6" stroke-width="0.700"/><path d="M0.500 2.900 H7.500 M0.500 4.900 H7.500 M2.800 0.800 V7 M5.200 0.800 V7" stroke="#e6e6e6" stroke-width="0.600"/></svg>
<svg style="position:absolute;left:619.75px;top:457px;" width="8" height="8" viewBox="0 0 8 8" ><rect x="0.500" y="0.800" width="7" height="6.200" fill="none" stroke="#bdbdbd" stroke-width="0.700"/><path d="M2.300 0.800 V7 M5.700 0.800 V7 M3 2.500 H5 M3 4 H5 M3 5.500 H5" stroke="#bdbdbd" stroke-width="0.550"/></svg>
<svg style="position:absolute;left:639.25px;top:457px;" width="8" height="8" viewBox="0 0 8 8" ><rect x="0.500" y="0.800" width="7" height="6.200" fill="none" stroke="#d0d0d0" stroke-width="0.700"/><path d="M2.500 0.800 V3.800 H5.500 V0.800" stroke="#d0d0d0" stroke-width="0.650" fill="none"/></svg>
<div style="position:absolute;left:657.75px;top:460px;width:4.4px;height:1.3px;background:#f0f0f0;"></div>
<div style="position:absolute;left:665.75px;top:459.8px;width:54px;height:1.7px;background:#868687;border-radius:0.800px;"></div>
<div style="position:absolute;left:688.55px;top:456.7px;width:8px;height:8px;background:#a6a6a7;border-radius:50%;"></div>
<div style="position:absolute;left:725.95px;top:450.5px;height:20px;line-height:20px;font-size:8.5px;color:#f0f0f0;font-weight:bold;white-space:nowrap;transform:translateX(-50%);">+</div>
<div style="position:absolute;left:737.75px;top:450.8px;height:20px;line-height:20px;font-size:6.88px;color:#e2e2e2;font-weight:normal;white-space:nowrap;text-shadow:0 0 0.300px #e2e2e2;">100%</div>
</div>
<div style="position:absolute;left:16.25px;top:20px;width:767.65px;height:467px;border-radius:5px;box-shadow:inset 0 0 0 0.600px rgba(255,255,255,0.170);"></div>
<div style="position:absolute;left:284px;top:186px;width:275px;height:131px;border-radius:5.500px;box-shadow:0 9px 18px 3px rgba(0,0,0,0.450),0 2px 4px rgba(0,0,0,0.350),0 0 0 0.500px rgba(0,0,0,0.500);"></div>
<div style="position:absolute;left:284px;top:186px;width:275px;height:131px;border-radius:5.500px;overflow:hidden;background:#332627;">
<div style="position:absolute;left:0px;top:0px;width:275px;height:15px;background:#41383a;"></div>
<div style="position:absolute;left:0px;top:15px;width:275px;height:0.6px;background:#231a1b;"></div>
<div style="position:absolute;left:137.5px;top:-2.0999999999999996px;height:20px;line-height:20px;font-size:7.35px;color:#d2cdcd;font-weight:bold;white-space:nowrap;transform:translateX(-50%);">Nieuwe opmaakregel</div>
<div style="position:absolute;left:11px;top:21.8px;height:20px;line-height:20px;font-size:7.26px;color:#f2f0f0;font-weight:normal;white-space:nowrap;text-shadow:0 0 0.300px #fff;">Stijl:</div>
<div style="position:absolute;left:29.7px;top:26.3px;width:81px;height:10.8px;background:#665e5e;border-radius:2.500px;box-shadow:0 0.500px 0.500px rgba(0,0,0,0.300);"></div>
<div style="position:absolute;left:34px;top:21.8px;height:20px;line-height:20px;font-size:7.26px;color:#f2f0f0;font-weight:normal;white-space:nowrap;text-shadow:0 0 0.300px #fff;">Klassiek</div>
<div style="position:absolute;left:101.5px;top:27.7px;width:8.3px;height:8.2px;background:#2466d8;border-radius:2.200px;"></div><svg style="position:absolute;left:101.5px;top:27.7px;" width="8.3" height="8.2" viewBox="0 0 8.3 8.2" ><path d="M2.400 3.300 L4.15 1.600 L5.9 3.300 M2.400 4.8999999999999995 L4.15 6.6 L5.9 4.8999999999999995" fill="none" stroke="#fff" stroke-width="0.950" stroke-linecap="round" stroke-linejoin="round"/></svg>
<div style="position:absolute;left:11px;top:45px;width:253px;height:0.7px;background:#463b3c;"></div>
<div style="position:absolute;left:11px;top:54px;width:212px;height:10.7px;background:#665e5e;border-radius:2.500px;box-shadow:0 0.500px 0.500px rgba(0,0,0,0.300);"></div>
<div style="position:absolute;left:15.5px;top:49.8px;height:20px;line-height:20px;font-size:7.26px;color:#f2f0f0;font-weight:normal;white-space:nowrap;text-shadow:0 0 0.300px #fff;">Alleen cellen opmaken met</div>
<div style="position:absolute;left:213.6px;top:55.2px;width:8.3px;height:8.2px;background:#2466d8;border-radius:2.200px;"></div><svg style="position:absolute;left:213.6px;top:55.2px;" width="8.3" height="8.2" viewBox="0 0 8.3 8.2" ><path d="M2.400 3.300 L4.15 1.600 L5.9 3.300 M2.400 4.8999999999999995 L4.15 6.6 L5.9 4.8999999999999995" fill="none" stroke="#fff" stroke-width="0.950" stroke-linecap="round" stroke-linejoin="round"/></svg>
<div style="position:absolute;left:9.3px;top:67.9px;width:213.6px;height:13.8px;background:#2f72bd;border-radius:4px;"></div>
<div style="position:absolute;left:11px;top:69.5px;width:210.3px;height:10.6px;background:#665e5e;border-radius:2.500px;"></div>
<div style="position:absolute;left:15.5px;top:64.8px;height:20px;line-height:20px;font-size:7.26px;color:#f2f0f0;font-weight:normal;white-space:nowrap;text-shadow:0 0 0.300px #fff;">Datums op of in</div>
<div style="position:absolute;left:103.3px;top:70.7px;width:8.3px;height:8.2px;background:#2466d8;border-radius:2.200px;"></div><svg style="position:absolute;left:103.3px;top:70.7px;" width="8.3" height="8.2" viewBox="0 0 8.3 8.2" ><path d="M2.400 3.300 L4.15 1.600 L5.9 3.300 M2.400 4.8999999999999995 L4.15 6.6 L5.9 4.8999999999999995" fill="none" stroke="#fff" stroke-width="0.950" stroke-linecap="round" stroke-linejoin="round"/></svg>
<div style="position:absolute;left:212.3px;top:70.7px;width:8.3px;height:8.2px;background:#2466d8;border-radius:2.200px;"></div><svg style="position:absolute;left:212.3px;top:70.7px;" width="8.3" height="8.2" viewBox="0 0 8.3 8.2" ><path d="M2.400 3.300 L4.15 1.600 L5.9 3.300 M2.400 4.8999999999999995 L4.15 6.6 L5.9 4.8999999999999995" fill="none" stroke="#fff" stroke-width="0.950" stroke-linecap="round" stroke-linejoin="round"/></svg>
<div style="position:absolute;left:11px;top:82.4px;height:20px;line-height:20px;font-size:7.26px;color:#f2f0f0;font-weight:normal;white-space:nowrap;text-shadow:0 0 0.300px #fff;">Opmaak:</div>
<div style="position:absolute;left:45px;top:87px;width:120px;height:10.8px;background:#665e5e;border-radius:2.500px;box-shadow:0 0.500px 0.500px rgba(0,0,0,0.300);"></div>
<div style="position:absolute;left:49.6px;top:82.4px;height:20px;line-height:20px;font-size:7.26px;color:#f2f0f0;font-weight:normal;white-space:nowrap;text-shadow:0 0 0.300px #fff;">Lichtrode opvulling</div>
<div style="position:absolute;left:168px;top:86px;width:96.2px;height:12px;background:#ffc7ce;"></div>
<div style="position:absolute;left:239.3px;top:82.5px;height:20px;line-height:20px;font-size:6.5px;color:#9c0006;font-weight:normal;white-space:nowrap;transform:translateX(-100%);text-shadow:0 0 0.250px #9c0006;">AaBbCcYyZz</div>
<div style="position:absolute;left:221.6px;top:109.3px;width:42.3px;height:10.7px;background:#1c66da;border-radius:2.500px;"></div>
<div style="position:absolute;left:242px;top:104.7px;height:20px;line-height:20px;font-size:7.26px;color:#fff;font-weight:normal;white-space:nowrap;transform:translateX(-50%);text-shadow:0 0 0.300px #fff;">OK</div>
<div style="position:absolute;left:172px;top:109.3px;width:44px;height:10.7px;background:#665e5e;border-radius:2.500px;"></div>
</div>
<div style="position:absolute;left:395.3px;top:253.3px;width:109.7px;height:124.5px;border-radius:3.500px;box-shadow:0 4px 10px 1px rgba(0,0,0,0.350),0 0 0 0.500px rgba(0,0,0,0.450);background:linear-gradient(180deg,#4a3a3d 0%,#4b3b3e 28%,#52474a 46%,#5a5252 58%,#5d5757 75%,#5f5958 100%);overflow:hidden;"><div style="position:absolute;left:58px;top:-12px;width:70px;height:70px;border-radius:50%;background:radial-gradient(closest-side,rgba(96,62,70,0.550),rgba(96,62,70,0));"></div></div>
<div style="position:absolute;left:397.6px;top:291.4px;width:104.7px;height:12.3px;background:#2a62c9;border-radius:2.500px;"></div>
<div style="position:absolute;left:408.5px;top:252.45px;height:20px;line-height:20px;font-size:7.26px;color:#f4f2f2;font-weight:normal;white-space:nowrap;text-shadow:0 0 0.300px #fff;">Gisteren</div>
<div style="position:absolute;left:408.5px;top:264.38px;height:20px;line-height:20px;font-size:7.26px;color:#f4f2f2;font-weight:normal;white-space:nowrap;text-shadow:0 0 0.300px #fff;">Vandaag</div>
<div style="position:absolute;left:408.5px;top:276.31px;height:20px;line-height:20px;font-size:7.26px;color:#f4f2f2;font-weight:normal;white-space:nowrap;text-shadow:0 0 0.300px #fff;">Morgen</div>
<div style="position:absolute;left:408.5px;top:288.24px;height:20px;line-height:20px;font-size:7.26px;color:#f4f2f2;font-weight:normal;white-space:nowrap;text-shadow:0 0 0.300px #fff;">In de laatste 7 dagen</div>
<div style="position:absolute;left:408.5px;top:300.16999999999996px;height:20px;line-height:20px;font-size:7.26px;color:#f4f2f2;font-weight:normal;white-space:nowrap;text-shadow:0 0 0.300px #fff;">Vorige week</div>
<div style="position:absolute;left:408.5px;top:312.09999999999997px;height:20px;line-height:20px;font-size:7.26px;color:#f4f2f2;font-weight:normal;white-space:nowrap;text-shadow:0 0 0.300px #fff;">Deze week</div>
<div style="position:absolute;left:408.5px;top:324.03px;height:20px;line-height:20px;font-size:7.26px;color:#f4f2f2;font-weight:normal;white-space:nowrap;text-shadow:0 0 0.300px #fff;">Volgende week</div>
<div style="position:absolute;left:408.5px;top:335.96px;height:20px;line-height:20px;font-size:7.26px;color:#f4f2f2;font-weight:normal;white-space:nowrap;text-shadow:0 0 0.300px #fff;">Vorige maand</div>
<div style="position:absolute;left:408.5px;top:347.89px;height:20px;line-height:20px;font-size:7.26px;color:#f4f2f2;font-weight:normal;white-space:nowrap;text-shadow:0 0 0.300px #fff;">Deze maand</div>
<div style="position:absolute;left:408.5px;top:359.82px;height:20px;line-height:20px;font-size:7.26px;color:#f4f2f2;font-weight:normal;white-space:nowrap;text-shadow:0 0 0.300px #fff;">Volgende maand</div>
<svg style="position:absolute;left:398.8px;top:258.5px;" width="7" height="7" viewBox="0 0 7 7" ><path d="M1 3.800 L2.800 5.800 L6 1" fill="none" stroke="#f4f2f2" stroke-width="0.950" stroke-linecap="round" stroke-linejoin="round"/></svg>
<svg style="position:absolute;left:501px;top:298.5px;" width="8" height="12" viewBox="0 0 8 12" ><path d="M1 0.800 V9.300 L3 7.500 L4.400 10.800 L5.800 10.200 L4.400 7 H7 Z" fill="#111" stroke="#fff" stroke-width="0.700" stroke-linejoin="round"/></svg>
<div style="position:absolute;left:334.500px;top:492.800px;width:131px;height:25.500px;border-radius:6px;background:rgba(70,14,34,0.850);box-shadow:0 0 0 0.600px rgba(175,115,135,0.550);"></div>
<div style="position:absolute;left:337.700px;top:496.200px;width:15.500px;height:15.500px;border-radius:3.600px;background:linear-gradient(90deg,#2d9af0 0%,#2d9af0 50%,#e8ecf2 50%,#dfe5ee 100%);overflow:hidden;"></div>
<svg style="position:absolute;left:337.7px;top:496.2px;" width="15.5" height="15.5" viewBox="0 0 15.5 15.5" ><path d="M8.300 0 C7 4 6.500 7 6.600 9 H8.600 C8.600 11 8.800 13.500 9.500 15.500" fill="none" stroke="#1b3e6e" stroke-width="0.600"/><path d="M4.200 4.500 V6.200 M11.300 4.500 V6.200" stroke="#16324f" stroke-width="0.800" stroke-linecap="round"/><path d="M3.300 10.500 Q7.800 13.500 12.200 10.500" stroke="#16324f" stroke-width="0.650" fill="none"/></svg>
<div style="position:absolute;left:357.800px;top:496.200px;width:15.500px;height:15.500px;border-radius:3.600px;background:linear-gradient(180deg,#2aa6f8,#1b78ee);"></div>
<svg style="position:absolute;left:357.8px;top:496.2px;" width="15.5" height="15.5" viewBox="0 0 15.5 15.5" ><rect x="2.600" y="4.500" width="10.300" height="6.800" rx="0.900" fill="#f4f8ff"/><path d="M2.800 4.800 L7.750 8.800 L12.700 4.800" fill="none" stroke="#8fb8e8" stroke-width="0.600"/></svg>
<div style="position:absolute;left:377.800px;top:496.200px;width:15.500px;height:15.500px;border-radius:3.600px;background:#1d1b2b;"></div>
<svg style="position:absolute;left:377.8px;top:496.2px;" width="15.5" height="15.5" viewBox="0 0 15.5 15.5" ><defs><radialGradient id="ff" cx="0.700" cy="0.200" r="0.950"><stop offset="0" stop-color="#ffe04a"/><stop offset="0.350" stop-color="#ff981e"/><stop offset="0.700" stop-color="#f5302c"/><stop offset="1" stop-color="#c01868"/></radialGradient></defs><circle cx="7.700" cy="8.300" r="5.900" fill="url(#ff)"/><circle cx="7.200" cy="8.100" r="3.300" fill="#6a42e0"/><path d="M10.500 2.200 C13 3.800 14.200 6.500 13.500 9.500 C12.800 12.300 10.300 14.200 7.600 14.200 C10.300 13 11.600 10.800 11.200 8.300 C10.900 6.600 9.800 5.600 8.600 5.400 C9.800 4.600 10.600 3.500 10.500 2.200 Z" fill="#ffb52c"/><path d="M2.600 5.200 C3.600 3.300 5.800 2.600 7.400 3.600 C6.200 3.800 5.600 4.600 5.800 5.600 C4.600 5.600 3.800 6.400 4 7.600 C3 7.200 2.400 6.400 2.600 5.200 Z" fill="#ff8a20"/></svg>
<div style="position:absolute;left:397.800px;top:496.200px;width:15.500px;height:15.500px;border-radius:3.600px;background:#f4f6f4;"></div>
<svg style="position:absolute;left:397.8px;top:496.2px;" width="15.5" height="15.5" viewBox="0 0 15.5 15.5" ><rect x="5" y="2.800" width="8" height="10" rx="0.800" fill="#1a8a4c"/><rect x="9" y="2.800" width="4" height="5" fill="#2aa866"/><rect x="5" y="7.800" width="4" height="5" fill="#136a3a"/><rect x="2.300" y="5" width="6.200" height="6.200" rx="0.800" fill="#0c5a30"/><text x="5.400" y="10.100" font-size="4.800" font-weight="bold" text-anchor="middle" fill="#fff" font-family="Liberation Sans,sans-serif">X</text></svg>
<div style="position:absolute;left:420.300px;top:496.500px;width:0.600px;height:16px;background:rgba(190,140,150,0.450);"></div>
<svg style="position:absolute;left:428.5px;top:495.5px;" width="13" height="17.5" viewBox="0 0 13 17.5" ><path d="M1 0.500 H9 L12.200 3.500 V17 H1 Z" fill="#ededed" stroke="#bdbdbd" stroke-width="0.400"/><path d="M9 0.500 V3.500 H12.200" fill="#d2d2d2"/><rect x="2.200" y="2" width="5" height="3" fill="#bdbdbd"/><rect x="2.200" y="6" width="8.800" height="2.500" fill="#cfcfcf"/><rect x="5.500" y="9.200" width="4.500" height="3.200" fill="#8d8d8d"/><rect x="2.200" y="13.300" width="8.800" height="2.500" fill="#d5d5d5"/></svg>
<svg style="position:absolute;left:447.5px;top:495px;" width="13" height="18" viewBox="0 0 13 18" ><path d="M1 3.500 H12 L10.800 16 Q10.700 17.300 9.500 17.300 H3.500 Q2.300 17.300 2.200 16 Z" fill="#8f8f92"/><path d="M2.500 4 L3.500 16.500 M5 4 L5.300 16.800 M7.800 4 L7.600 16.800 M10.400 4 L9.400 16.500" stroke="#6c6c70" stroke-width="0.500"/><ellipse cx="6.500" cy="3.400" rx="5.700" ry="1.700" fill="#b8b8bc"/><ellipse cx="6.500" cy="3.300" rx="4.500" ry="1.100" fill="#6a5a58"/><path d="M3.500 3 L5 2.300 L6.500 3.200 L8 2.400 L9.500 3.100" stroke="#d8c8b0" stroke-width="0.600" fill="none"/></svg>
<div style="position:absolute;left:344.5px;top:514.300px;width:1.800px;height:1.800px;border-radius:50%;background:#e4d0d2;"></div>
<div style="position:absolute;left:364.6px;top:514.300px;width:1.800px;height:1.800px;border-radius:50%;background:#e4d0d2;"></div>
<div style="position:absolute;left:384.6px;top:514.300px;width:1.800px;height:1.800px;border-radius:50%;background:#e4d0d2;"></div>
<div style="position:absolute;left:404.6px;top:514.300px;width:1.800px;height:1.800px;border-radius:50%;background:#e4d0d2;"></div>
<div style="position:absolute;left:437.700px;top:487px;width:0.700px;height:4.300px;background:#c4c4c4;"></div></div></body></html>
